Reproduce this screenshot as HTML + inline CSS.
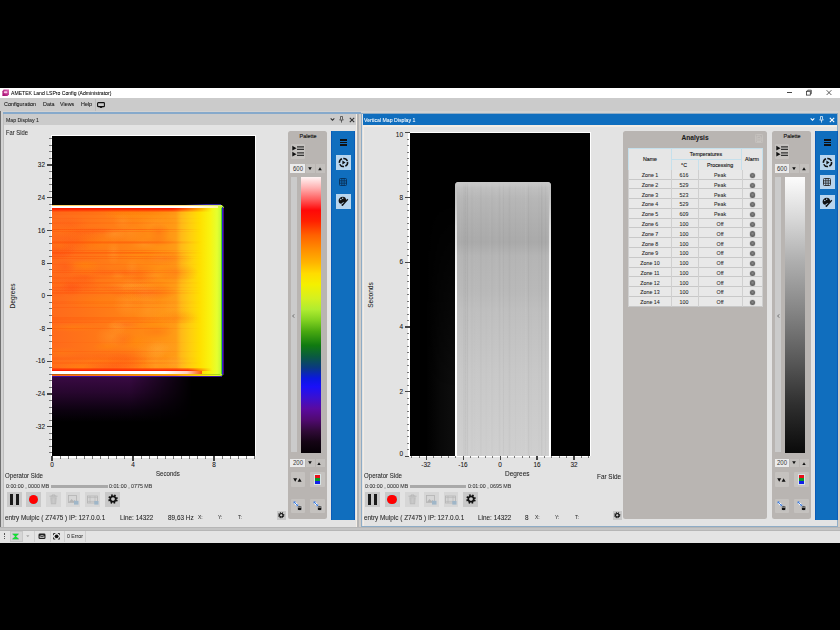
<!DOCTYPE html>
<html><head><meta charset="utf-8">
<style>
*{margin:0;padding:0;box-sizing:border-box}
html,body{width:840px;height:630px;overflow:hidden;background:#000;font-family:"Liberation Sans",sans-serif;color:#222;position:relative}
.a{position:absolute}
.t{position:absolute;white-space:nowrap;line-height:1;-webkit-text-stroke:0.06px currentColor}
</style></head><body>
<div class="a" style="left:0px;top:88px;width:840px;height:10px;background:#fff"></div>
<div class="a" style="left:0px;top:98px;width:840px;height:13px;background:#cbcbcb"></div>
<div class="a" style="left:0px;top:111px;width:840px;height:420px;background:#d2d2d2"></div>
<div class="a" style="left:0px;top:111px;width:0.9px;height:420px;background:#707070"></div>
<div class="a" style="left:2.6px;top:113px;width:354.4px;height:413.5px;background:#e3e3e3"></div>
<div class="a" style="left:2.6px;top:113px;width:1.2px;height:413.5px;background:#bdbdbd"></div>
<div class="a" style="left:3px;top:112.3px;width:358px;height:1.7px;background:#86a9cb"></div>
<div class="a" style="left:3.8px;top:114px;width:352px;height:11px;background:#cbcbcb"></div>
<div class="a" style="left:355.7px;top:114px;width:0.9px;height:413px;background:#f4eee6"></div>
<div class="a" style="left:356.8px;top:114px;width:2.2px;height:413px;background:#b4b4b4"></div>
<div class="a" style="left:359px;top:114px;width:2.3px;height:413px;background:#d0ccc8"></div>
<div class="a" style="left:361.3px;top:113px;width:477px;height:413.5px;background:#e3e3e3;border:1.3px solid #8eacc6"></div>
<div class="a" style="left:362.6px;top:114px;width:474.6px;height:11px;background:#106ebe"></div>
<div class="a" style="left:362.6px;top:125.3px;width:474.6px;height:1.6px;background:#f3ece4"></div>
<div class="a" style="left:362.8px;top:125px;width:0.9px;height:401px;background:#f3ece4"></div>
<div class="a" style="left:838.2px;top:111px;width:1.8px;height:420px;background:#d6cdc4"></div>
<div class="a" style="left:0px;top:526.5px;width:840px;height:4.5px;background:#c4c4c4"></div>
<div class="a" style="left:0px;top:527.2px;width:840px;height:0.9px;background:#b6b6b6"></div>
<div class="a" style="left:0px;top:529.6px;width:840px;height:0.9px;background:#b6b6b6"></div>
<div class="a" style="left:0px;top:531px;width:840px;height:12px;background:#e4e4e4"></div>
<svg class="a" style="left:1.5px;top:89px" width="7.5" height="7.5" viewBox="0 0 7.5 7.5"><defs><linearGradient id="ag" x1="1" y1="0" x2="0" y2="1"><stop offset="0" stop-color="#e070b8"/><stop offset="1" stop-color="#a0006a"/></linearGradient></defs><path d="M1.6 0.4h5.5v4.8l-1.6 1.9H0.4V2.3z" fill="url(#ag)"/><rect x="1.8" y="2.3" width="3.6" height="2" rx="1" fill="#ffd0ec" opacity="0.9"/></svg>
<div class="t" style="left:10.7px;top:90.69px;font-size:5.61px;transform:scaleX(0.9091);transform-origin:0 50%;color:#000">AMETEK Land LSPro Config (Administrator)</div>
<div class="a" style="left:787px;top:92.2px;width:4.6px;height:0.8px;background:#444"></div>
<svg class="a" style="left:805px;top:89px" width="8" height="8" viewBox="0 0 8 8"><rect x="1.5" y="2.3" width="3.8" height="3.8" fill="none" stroke="#333" stroke-width="0.8"/><path d="M2.7 2.3V1.2h3.6v3.6H5.3" fill="none" stroke="#333" stroke-width="0.8"/></svg>
<svg class="a" style="left:825px;top:89px" width="8" height="8" viewBox="0 0 8 8"><path d="M1.6 1.2L6.4 6M6.4 1.2L1.6 6" stroke="#333" stroke-width="0.8"/></svg>
<div class="t" style="left:3.6px;top:102.23px;font-size:5.94px;transform:scaleX(0.9091);transform-origin:0 50%;color:#111">Configuration</div>
<div class="t" style="left:42.9px;top:102.23px;font-size:5.94px;transform:scaleX(0.9091);transform-origin:0 50%;color:#111">Data</div>
<div class="t" style="left:60px;top:102.23px;font-size:5.94px;transform:scaleX(0.9091);transform-origin:0 50%;color:#111">Views</div>
<div class="t" style="left:80.7px;top:102.23px;font-size:5.94px;transform:scaleX(0.9091);transform-origin:0 50%;color:#111">Help</div>
<div class="a" style="left:95px;top:99px;width:1px;height:12px;background:#bbb"></div>
<svg class="a" style="left:96.5px;top:101.5px" width="8" height="6" viewBox="0 0 8 6"><rect x="0.6" y="0.6" width="6.8" height="4" rx="0.7" fill="none" stroke="#111" stroke-width="1.1"/><rect x="2.8" y="4.9" width="2.4" height="1" fill="#111"/></svg>
<div class="t" style="left:5.8px;top:117.84px;font-size:5.72px;transform:scaleX(0.9091);transform-origin:0 50%;color:#1e1e1e">Map Display 1</div>
<div class="t" style="left:363.8px;top:117.84px;font-size:5.72px;transform:scaleX(0.9091);transform-origin:0 50%;color:#fff">Vertical Map Display 1</div>
<svg class="a" style="left:329.5px;top:117px" width="5" height="5" viewBox="0 0 5 5"><path d="M0.7 1.4L2.5 3.3L4.3 1.4" fill="none" stroke="#333" stroke-width="1.1"/></svg>
<svg class="a" style="left:339.3px;top:116.3px" width="5" height="7" viewBox="0 0 5 7"><path d="M1.5 0.5h2v2.6l0.9 0.9h-3.8l0.9-0.9z" fill="none" stroke="#333" stroke-width="0.7"/><path d="M2.5 4v2.6" stroke="#333" stroke-width="0.7"/></svg>
<svg class="a" style="left:349px;top:116.5px" width="6" height="6" viewBox="0 0 6 6"><path d="M0.8 0.8L5.2 5.2M5.2 0.8L0.8 5.2" stroke="#333" stroke-width="1.1"/></svg>
<svg class="a" style="left:809.5px;top:117px" width="5" height="5" viewBox="0 0 5 5"><path d="M0.7 1.4L2.5 3.3L4.3 1.4" fill="none" stroke="#fff" stroke-width="1.1"/></svg>
<svg class="a" style="left:819.3px;top:116.3px" width="5" height="7" viewBox="0 0 5 7"><path d="M1.5 0.5h2v2.6l0.9 0.9h-3.8l0.9-0.9z" fill="none" stroke="#fff" stroke-width="0.7"/><path d="M2.5 4v2.6" stroke="#fff" stroke-width="0.7"/></svg>
<svg class="a" style="left:829px;top:116.5px" width="6" height="6" viewBox="0 0 6 6"><path d="M0.8 0.8L5.2 5.2M5.2 0.8L0.8 5.2" stroke="#fff" stroke-width="1.1"/></svg>
<div class="a" style="left:52px;top:135px;width:204px;height:321px;background:#fff"></div>
<div class="a" style="left:52px;top:136px;width:203px;height:320px;background:#000"></div>
<div class="a" style="left:52px;top:376px;width:140px;height:46px;background:linear-gradient(180deg,rgba(58,10,68,1) 0%,rgba(44,7,52,.9) 35%,rgba(20,3,26,.6) 75%,rgba(0,0,0,0) 100%);-webkit-mask-image:linear-gradient(90deg,#000 0%,#000 55%,transparent 100%)"></div>
<div class="a" style="left:52px;top:205px;width:172px;height:171px;border-radius:0 4px 4px 0;background:radial-gradient(16.4% 2.3% at 24.3% 15.1%,rgba(255,60,20,0.21) 0%,rgba(255,60,20,0) 100%),radial-gradient(6.6% 3.7% at 4.3% 50.7%,rgba(255,60,20,0.11) 0%,rgba(255,60,20,0) 100%),radial-gradient(8.0% 2.9% at 31.8% 82.7%,rgba(255,150,0,0.23) 0%,rgba(255,150,0,0) 100%),radial-gradient(21.6% 2.2% at 43.3% 39.7%,rgba(255,60,20,0.27) 0%,rgba(255,60,20,0) 100%),radial-gradient(10.9% 5.3% at 10.8% 11.8%,rgba(255,60,20,0.14) 0%,rgba(255,60,20,0) 100%),radial-gradient(14.8% 2.3% at 47.9% 37.2%,rgba(255,60,20,0.11) 0%,rgba(255,60,20,0) 100%),radial-gradient(11.0% 4.3% at 51.0% 42.8%,rgba(255,60,20,0.19) 0%,rgba(255,60,20,0) 100%),radial-gradient(9.9% 4.3% at 59.6% 69.9%,rgba(255,150,0,0.21) 0%,rgba(255,150,0,0) 100%),radial-gradient(21.7% 2.5% at 54.7% 28.8%,rgba(255,150,0,0.18) 0%,rgba(255,150,0,0) 100%),radial-gradient(6.6% 4.7% at 11.4% 48.9%,rgba(255,60,20,0.25) 0%,rgba(255,60,20,0) 100%),radial-gradient(17.1% 4.4% at 65.7% 31.4%,rgba(255,60,20,0.22) 0%,rgba(255,60,20,0) 100%),radial-gradient(13.6% 4.7% at 63.0% 94.5%,rgba(255,150,0,0.11) 0%,rgba(255,150,0,0) 100%),radial-gradient(19.2% 3.1% at 48.5% 99.3%,rgba(255,150,0,0.18) 0%,rgba(255,150,0,0) 100%),radial-gradient(8.7% 2.5% at 1.7% 46.2%,rgba(255,150,0,0.11) 0%,rgba(255,150,0,0) 100%),radial-gradient(12.3% 5.5% at 9.7% 24.8%,rgba(255,60,20,0.12) 0%,rgba(255,60,20,0) 100%),radial-gradient(19.1% 5.5% at 41.2% 88.3%,rgba(255,60,20,0.16) 0%,rgba(255,60,20,0) 100%),radial-gradient(21.3% 2.6% at 26.9% 88.4%,rgba(255,60,20,0.14) 0%,rgba(255,60,20,0) 100%),radial-gradient(15.4% 3.1% at 17.5% 48.5%,rgba(255,60,20,0.10) 0%,rgba(255,60,20,0) 100%),radial-gradient(21.2% 4.8% at 27.7% 56.6%,rgba(255,150,0,0.20) 0%,rgba(255,150,0,0) 100%),radial-gradient(20.4% 5.1% at 50.7% 5.4%,rgba(255,150,0,0.27) 0%,rgba(255,150,0,0) 100%),radial-gradient(7.7% 4.5% at 29.4% 39.9%,rgba(255,60,20,0.11) 0%,rgba(255,60,20,0) 100%),radial-gradient(11.4% 2.2% at 15.7% 16.2%,rgba(255,60,20,0.10) 0%,rgba(255,60,20,0) 100%),radial-gradient(6.4% 5.5% at 7.6% 36.4%,rgba(255,60,20,0.22) 0%,rgba(255,60,20,0) 100%),radial-gradient(11.8% 2.5% at 18.9% 34.7%,rgba(255,150,0,0.27) 0%,rgba(255,150,0,0) 100%),radial-gradient(7.4% 2.4% at 34.9% 48.4%,rgba(255,60,20,0.17) 0%,rgba(255,60,20,0) 100%),radial-gradient(6.4% 5.8% at 62.2% 16.1%,rgba(255,60,20,0.21) 0%,rgba(255,60,20,0) 100%),radial-gradient(14.4% 5.9% at 40.7% 2.7%,rgba(255,150,0,0.27) 0%,rgba(255,150,0,0) 100%),radial-gradient(8.7% 5.1% at 19.6% 36.7%,rgba(255,150,0,0.21) 0%,rgba(255,150,0,0) 100%),radial-gradient(19.0% 5.9% at 24.7% 22.3%,rgba(255,150,0,0.27) 0%,rgba(255,150,0,0) 100%),radial-gradient(9.6% 4.1% at 61.4% 74.0%,rgba(255,60,20,0.17) 0%,rgba(255,60,20,0) 100%),radial-gradient(10.1% 4.8% at 2.1% 27.9%,rgba(255,60,20,0.29) 0%,rgba(255,60,20,0) 100%),radial-gradient(21.3% 3.5% at 70.3% 98.8%,rgba(255,60,20,0.14) 0%,rgba(255,60,20,0) 100%),radial-gradient(16.0% 5.6% at 14.8% 20.4%,rgba(255,60,20,0.27) 0%,rgba(255,60,20,0) 100%),radial-gradient(7.4% 4.6% at 49.0% 80.0%,rgba(255,150,0,0.28) 0%,rgba(255,150,0,0) 100%),radial-gradient(8.9% 5.2% at 56.3% 47.8%,rgba(255,150,0,0.17) 0%,rgba(255,150,0,0) 100%),radial-gradient(12.4% 5.8% at 72.9% 39.6%,rgba(255,60,20,0.24) 0%,rgba(255,60,20,0) 100%),radial-gradient(20.5% 5.2% at 9.5% 15.1%,rgba(255,150,0,0.13) 0%,rgba(255,150,0,0) 100%),radial-gradient(11.6% 4.2% at 73.5% 65.7%,rgba(255,60,20,0.13) 0%,rgba(255,60,20,0) 100%),radial-gradient(14.4% 5.7% at 72.8% 65.0%,rgba(255,150,0,0.19) 0%,rgba(255,150,0,0) 100%),radial-gradient(10.0% 3.2% at 62.0% 21.1%,rgba(255,60,20,0.15) 0%,rgba(255,60,20,0) 100%),radial-gradient(8.1% 5.6% at 19.5% 41.9%,rgba(255,60,20,0.17) 0%,rgba(255,60,20,0) 100%),radial-gradient(12.7% 5.7% at 43.8% 90.4%,rgba(255,60,20,0.20) 0%,rgba(255,60,20,0) 100%),radial-gradient(13.0% 2.7% at 39.3% 1.9%,rgba(255,150,0,0.10) 0%,rgba(255,150,0,0) 100%),radial-gradient(17.6% 4.2% at 12.9% 47.3%,rgba(255,60,20,0.17) 0%,rgba(255,60,20,0) 100%),radial-gradient(7.7% 4.2% at 41.7% 78.4%,rgba(255,60,20,0.15) 0%,rgba(255,60,20,0) 100%),radial-gradient(15.0% 5.0% at 57.9% 50.8%,rgba(255,60,20,0.28) 0%,rgba(255,60,20,0) 100%),radial-gradient(14.2% 4.8% at 45.9% 50.6%,rgba(255,60,20,0.19) 0%,rgba(255,60,20,0) 100%),radial-gradient(17.2% 5.5% at 35.9% 94.2%,rgba(255,60,20,0.29) 0%,rgba(255,60,20,0) 100%),radial-gradient(19.4% 2.5% at 42.0% 94.3%,rgba(255,60,20,0.12) 0%,rgba(255,60,20,0) 100%),radial-gradient(7.2% 4.7% at 5.4% 24.1%,rgba(255,150,0,0.26) 0%,rgba(255,150,0,0) 100%),radial-gradient(16.6% 2.6% at 11.6% 71.6%,rgba(255,150,0,0.28) 0%,rgba(255,150,0,0) 100%),radial-gradient(12.4% 3.9% at 16.5% 95.3%,rgba(255,150,0,0.30) 0%,rgba(255,150,0,0) 100%),radial-gradient(14.2% 3.4% at 12.1% 43.2%,rgba(255,60,20,0.14) 0%,rgba(255,60,20,0) 100%),radial-gradient(14.9% 3.8% at 54.2% 1.9%,rgba(255,60,20,0.10) 0%,rgba(255,60,20,0) 100%),radial-gradient(7.0% 5.9% at 46.8% 51.2%,rgba(255,150,0,0.26) 0%,rgba(255,150,0,0) 100%),radial-gradient(6.6% 5.1% at 7.9% 26.6%,rgba(255,60,20,0.15) 0%,rgba(255,60,20,0) 100%),radial-gradient(19.1% 3.0% at 31.7% 91.1%,rgba(255,150,0,0.13) 0%,rgba(255,150,0,0) 100%),radial-gradient(7.4% 2.2% at 42.8% 70.0%,rgba(255,60,20,0.24) 0%,rgba(255,60,20,0) 100%),radial-gradient(16.2% 5.2% at 5.4% 93.8%,rgba(255,150,0,0.12) 0%,rgba(255,150,0,0) 100%),radial-gradient(13.3% 3.4% at 5.0% 86.3%,rgba(255,150,0,0.21) 0%,rgba(255,150,0,0) 100%),radial-gradient(8.2% 4.7% at 44.9% 16.6%,rgba(255,175,60,0.17) 0%,rgba(255,175,60,0) 100%),radial-gradient(5.6% 5.2% at 41.0% 9.5%,rgba(255,175,60,0.21) 0%,rgba(255,175,60,0) 100%),radial-gradient(8.0% 4.2% at 63.1% 31.1%,rgba(255,175,60,0.22) 0%,rgba(255,175,60,0) 100%),radial-gradient(4.1% 8.1% at 35.7% 27.5%,rgba(255,175,60,0.26) 0%,rgba(255,175,60,0) 100%),radial-gradient(11.5% 3.7% at 42.0% 47.7%,rgba(255,175,60,0.31) 0%,rgba(255,175,60,0) 100%),radial-gradient(10.7% 5.8% at 51.0% 49.6%,rgba(255,175,60,0.25) 0%,rgba(255,175,60,0) 100%),radial-gradient(6.7% 8.8% at 60.4% 93.4%,rgba(255,175,60,0.29) 0%,rgba(255,175,60,0) 100%),radial-gradient(6.8% 3.4% at 58.5% 41.4%,rgba(255,175,60,0.18) 0%,rgba(255,175,60,0) 100%),radial-gradient(6.0% 4.1% at 37.6% 71.7%,rgba(255,175,60,0.17) 0%,rgba(255,175,60,0) 100%),radial-gradient(9.4% 5.0% at 66.1% 83.3%,rgba(255,175,60,0.20) 0%,rgba(255,175,60,0) 100%),radial-gradient(5.3% 6.1% at 45.8% 46.4%,rgba(255,175,60,0.20) 0%,rgba(255,175,60,0) 100%),radial-gradient(8.4% 4.7% at 70.6% 92.5%,rgba(255,175,60,0.34) 0%,rgba(255,175,60,0) 100%),radial-gradient(4.0% 5.7% at 46.5% 37.1%,rgba(255,175,60,0.24) 0%,rgba(255,175,60,0) 100%),radial-gradient(8.0% 3.0% at 53.6% 23.1%,rgba(255,175,60,0.20) 0%,rgba(255,175,60,0) 100%),radial-gradient(4.3% 3.2% at 38.3% 41.0%,rgba(255,175,60,0.21) 0%,rgba(255,175,60,0) 100%),radial-gradient(8.2% 8.3% at 43.6% 57.7%,rgba(255,175,60,0.28) 0%,rgba(255,175,60,0) 100%),radial-gradient(7.1% 5.3% at 61.5% 84.1%,rgba(255,175,60,0.35) 0%,rgba(255,175,60,0) 100%),radial-gradient(9.1% 3.3% at 40.5% 70.2%,rgba(255,175,60,0.32) 0%,rgba(255,175,60,0) 100%),radial-gradient(9.9% 8.7% at 68.0% 61.5%,rgba(255,175,60,0.18) 0%,rgba(255,175,60,0) 100%),radial-gradient(10.7% 8.6% at 54.4% 50.4%,rgba(255,175,60,0.32) 0%,rgba(255,175,60,0) 100%),radial-gradient(9.5% 7.9% at 56.6% 85.4%,rgba(255,175,60,0.20) 0%,rgba(255,175,60,0) 100%),radial-gradient(6.9% 3.7% at 36.2% 17.0%,rgba(255,175,60,0.32) 0%,rgba(255,175,60,0) 100%),radial-gradient(9.0% 7.8% at 55.7% 61.5%,rgba(255,175,60,0.25) 0%,rgba(255,175,60,0) 100%),radial-gradient(10.0% 6.5% at 35.1% 76.8%,rgba(255,175,60,0.26) 0%,rgba(255,175,60,0) 100%),radial-gradient(9.9% 4.8% at 59.4% 10.9%,rgba(255,175,60,0.16) 0%,rgba(255,175,60,0) 100%),linear-gradient(90deg,#ff6a1c 0%,#ff7418 20%,#ff8016 40%,#ff8a14 55%,#ff9414 66%,#ff9c16 72%,#ffb818 75%,#ffcc10 80%,#ffe000 86%,#f8f410 92%,#e4ff30 96%,#a8f040 100%)"></div>
<div class="a" style="left:52px;top:207px;width:150px;height:163px;-webkit-mask-image:linear-gradient(90deg,#000 0%,#000 60%,transparent 100%);background:linear-gradient(180deg,transparent 27.5%,rgba(255,70,0,0.20) 27.5%,rgba(255,70,0,0.20) 28.3%,transparent 28.3%),linear-gradient(180deg,transparent 21.7%,rgba(255,70,0,0.21) 21.7%,rgba(255,70,0,0.21) 22.5%,transparent 22.5%),linear-gradient(180deg,transparent 95.7%,rgba(255,70,0,0.16) 95.7%,rgba(255,70,0,0.16) 96.5%,transparent 96.5%),linear-gradient(180deg,transparent 38.7%,rgba(255,70,0,0.16) 38.7%,rgba(255,70,0,0.16) 39.5%,transparent 39.5%),linear-gradient(180deg,transparent 67.6%,rgba(255,70,0,0.21) 67.6%,rgba(255,70,0,0.21) 68.4%,transparent 68.4%),linear-gradient(180deg,transparent 61.2%,rgba(255,70,0,0.19) 61.2%,rgba(255,70,0,0.19) 62.0%,transparent 62.0%),linear-gradient(180deg,transparent 9.4%,rgba(255,70,0,0.11) 9.4%,rgba(255,70,0,0.11) 10.2%,transparent 10.2%),linear-gradient(180deg,transparent 26.4%,rgba(255,70,0,0.21) 26.4%,rgba(255,70,0,0.21) 27.2%,transparent 27.2%),linear-gradient(180deg,transparent 31.2%,rgba(255,70,0,0.18) 31.2%,rgba(255,70,0,0.18) 32.0%,transparent 32.0%),linear-gradient(180deg,transparent 3.2%,rgba(255,70,0,0.09) 3.2%,rgba(255,70,0,0.09) 4.0%,transparent 4.0%),linear-gradient(180deg,transparent 27.8%,rgba(255,70,0,0.19) 27.8%,rgba(255,70,0,0.19) 28.6%,transparent 28.6%),linear-gradient(180deg,transparent 68.4%,rgba(255,70,0,0.19) 68.4%,rgba(255,70,0,0.19) 69.2%,transparent 69.2%),linear-gradient(180deg,transparent 29.9%,rgba(255,70,0,0.17) 29.9%,rgba(255,70,0,0.17) 30.7%,transparent 30.7%),linear-gradient(180deg,transparent 46.6%,rgba(255,70,0,0.16) 46.6%,rgba(255,70,0,0.16) 47.4%,transparent 47.4%),linear-gradient(180deg,transparent 13.4%,rgba(255,70,0,0.23) 13.4%,rgba(255,70,0,0.23) 14.2%,transparent 14.2%),linear-gradient(180deg,transparent 21.1%,rgba(255,70,0,0.25) 21.1%,rgba(255,70,0,0.25) 21.9%,transparent 21.9%),linear-gradient(180deg,transparent 91.9%,rgba(255,70,0,0.08) 91.9%,rgba(255,70,0,0.08) 92.7%,transparent 92.7%),linear-gradient(180deg,transparent 46.1%,rgba(255,70,0,0.22) 46.1%,rgba(255,70,0,0.22) 46.9%,transparent 46.9%),linear-gradient(180deg,transparent 94.9%,rgba(255,70,0,0.16) 94.9%,rgba(255,70,0,0.16) 95.7%,transparent 95.7%),linear-gradient(180deg,transparent 27.8%,rgba(255,70,0,0.12) 27.8%,rgba(255,70,0,0.12) 28.6%,transparent 28.6%),linear-gradient(180deg,transparent 92.8%,rgba(255,70,0,0.12) 92.8%,rgba(255,70,0,0.12) 93.6%,transparent 93.6%),linear-gradient(180deg,transparent 57.8%,rgba(255,70,0,0.10) 57.8%,rgba(255,70,0,0.10) 58.6%,transparent 58.6%),linear-gradient(180deg,transparent 52.3%,rgba(255,70,0,0.24) 52.3%,rgba(255,70,0,0.24) 53.1%,transparent 53.1%),linear-gradient(180deg,transparent 14.7%,rgba(255,70,0,0.22) 14.7%,rgba(255,70,0,0.22) 15.5%,transparent 15.5%),linear-gradient(180deg,transparent 50.8%,rgba(255,70,0,0.23) 50.8%,rgba(255,70,0,0.23) 51.6%,transparent 51.6%),linear-gradient(180deg,transparent 69.5%,rgba(255,70,0,0.12) 69.5%,rgba(255,70,0,0.12) 70.3%,transparent 70.3%),linear-gradient(180deg,transparent 88.2%,rgba(255,70,0,0.16) 88.2%,rgba(255,70,0,0.16) 89.0%,transparent 89.0%),linear-gradient(180deg,transparent 4.4%,rgba(255,70,0,0.08) 4.4%,rgba(255,70,0,0.08) 5.2%,transparent 5.2%),linear-gradient(180deg,transparent 49.2%,rgba(255,70,0,0.16) 49.2%,rgba(255,70,0,0.16) 50.0%,transparent 50.0%),linear-gradient(180deg,transparent 31.0%,rgba(255,70,0,0.10) 31.0%,rgba(255,70,0,0.10) 31.8%,transparent 31.8%),linear-gradient(180deg,transparent 35.0%,rgba(255,70,0,0.13) 35.0%,rgba(255,70,0,0.13) 35.8%,transparent 35.8%),linear-gradient(180deg,transparent 82.7%,rgba(255,70,0,0.08) 82.7%,rgba(255,70,0,0.08) 83.5%,transparent 83.5%),linear-gradient(180deg,transparent 74.1%,rgba(255,70,0,0.22) 74.1%,rgba(255,70,0,0.22) 74.9%,transparent 74.9%),linear-gradient(180deg,transparent 13.5%,rgba(255,70,0,0.24) 13.5%,rgba(255,70,0,0.24) 14.3%,transparent 14.3%),linear-gradient(180deg,transparent 70.5%,rgba(255,70,0,0.23) 70.5%,rgba(255,70,0,0.23) 71.3%,transparent 71.3%),linear-gradient(180deg,transparent 29.8%,rgba(255,70,0,0.14) 29.8%,rgba(255,70,0,0.14) 30.6%,transparent 30.6%),linear-gradient(180deg,transparent 39.7%,rgba(255,70,0,0.25) 39.7%,rgba(255,70,0,0.25) 40.5%,transparent 40.5%),linear-gradient(180deg,transparent 58.6%,rgba(255,70,0,0.14) 58.6%,rgba(255,70,0,0.14) 59.4%,transparent 59.4%),linear-gradient(180deg,transparent 43.1%,rgba(255,70,0,0.13) 43.1%,rgba(255,70,0,0.13) 43.9%,transparent 43.9%),linear-gradient(180deg,transparent 6.6%,rgba(255,70,0,0.10) 6.6%,rgba(255,70,0,0.10) 7.4%,transparent 7.4%)"></div>
<div class="a" style="left:52px;top:205px;width:170px;height:1px;background:linear-gradient(90deg,#ffd060,#ffe080 80%,#d8f060)"></div>
<div class="a" style="left:52px;top:206px;width:166px;height:2px;background:linear-gradient(90deg,#fff 0%,#fff 85%,#fff4a0 100%)"></div>
<div class="a" style="left:52px;top:208px;width:160px;height:3.5px;background:linear-gradient(180deg,rgba(255,20,0,1),rgba(255,40,0,.8) 50%,rgba(255,60,0,.2));-webkit-mask-image:linear-gradient(90deg,#000 0%,#000 75%,transparent 100%)"></div>
<div class="a" style="left:52px;top:367.5px;width:160px;height:3.5px;background:linear-gradient(180deg,rgba(255,40,0,.3),rgba(255,20,0,1));-webkit-mask-image:linear-gradient(90deg,#000 0%,#000 85%,transparent 100%)"></div>
<div class="a" style="left:52px;top:371px;width:150px;height:3.2px;background:linear-gradient(90deg,#fff 0%,#fff 75%,#ffd0c0 90%,rgba(255,60,0,.8) 100%)"></div>
<div class="a" style="left:52px;top:374.2px;width:168px;height:1.3px;background:linear-gradient(90deg,#c05a10,#ffb000 80%,#a0e020)"></div>
<div class="a" style="left:52px;top:375.5px;width:170px;height:1px;background:#3a10a0"></div>
<div class="a" style="left:221px;top:208px;width:1.4px;height:166px;background:#50d820"></div>
<div class="a" style="left:222.4px;top:207px;width:1px;height:168px;background:#2a20d0"></div>
<div class="a" style="left:223.4px;top:208px;width:0.9px;height:166px;background:#4a0a70"></div>
<div class="a" style="left:185px;top:204.4px;width:36px;height:0.9px;background:linear-gradient(90deg,rgba(48,32,160,0),#3020a0 60%)"></div>
<div class="a" style="left:185px;top:375.6px;width:36px;height:0.9px;background:linear-gradient(90deg,rgba(48,32,160,0),#3020a0 60%)"></div>
<div class="a" style="left:50.5px;top:135px;width:1.5px;height:322px;background:#fff"></div>
<div class="a" style="left:49.4px;top:452.36760000000004px;width:2.6px;height:1px;background:#444;opacity:.7"></div>
<div class="a" style="left:49.4px;top:445.8252px;width:2.6px;height:1px;background:#444;opacity:.7"></div>
<div class="a" style="left:49.4px;top:439.28280000000007px;width:2.6px;height:1px;background:#444;opacity:.7"></div>
<div class="a" style="left:49.4px;top:432.7404px;width:2.6px;height:1px;background:#444;opacity:.7"></div>
<div class="a" style="left:49.4px;top:419.65560000000005px;width:2.6px;height:1px;background:#444;opacity:.7"></div>
<div class="a" style="left:49.4px;top:413.1132px;width:2.6px;height:1px;background:#444;opacity:.7"></div>
<div class="a" style="left:49.4px;top:406.5708px;width:2.6px;height:1px;background:#444;opacity:.7"></div>
<div class="a" style="left:49.4px;top:400.02840000000003px;width:2.6px;height:1px;background:#444;opacity:.7"></div>
<div class="a" style="left:49.4px;top:386.94360000000006px;width:2.6px;height:1px;background:#444;opacity:.7"></div>
<div class="a" style="left:49.4px;top:380.4012px;width:2.6px;height:1px;background:#444;opacity:.7"></div>
<div class="a" style="left:49.4px;top:373.85880000000003px;width:2.6px;height:1px;background:#444;opacity:.7"></div>
<div class="a" style="left:49.4px;top:367.31640000000004px;width:2.6px;height:1px;background:#444;opacity:.7"></div>
<div class="a" style="left:49.4px;top:354.2316px;width:2.6px;height:1px;background:#444;opacity:.7"></div>
<div class="a" style="left:49.4px;top:347.6892px;width:2.6px;height:1px;background:#444;opacity:.7"></div>
<div class="a" style="left:49.4px;top:341.14680000000004px;width:2.6px;height:1px;background:#444;opacity:.7"></div>
<div class="a" style="left:49.4px;top:334.60440000000006px;width:2.6px;height:1px;background:#444;opacity:.7"></div>
<div class="a" style="left:49.4px;top:321.5196px;width:2.6px;height:1px;background:#444;opacity:.7"></div>
<div class="a" style="left:49.4px;top:314.97720000000004px;width:2.6px;height:1px;background:#444;opacity:.7"></div>
<div class="a" style="left:49.4px;top:308.4348px;width:2.6px;height:1px;background:#444;opacity:.7"></div>
<div class="a" style="left:49.4px;top:301.8924px;width:2.6px;height:1px;background:#444;opacity:.7"></div>
<div class="a" style="left:49.4px;top:288.80760000000004px;width:2.6px;height:1px;background:#444;opacity:.7"></div>
<div class="a" style="left:49.4px;top:282.26520000000005px;width:2.6px;height:1px;background:#444;opacity:.7"></div>
<div class="a" style="left:49.4px;top:275.7228px;width:2.6px;height:1px;background:#444;opacity:.7"></div>
<div class="a" style="left:49.4px;top:269.1804px;width:2.6px;height:1px;background:#444;opacity:.7"></div>
<div class="a" style="left:49.4px;top:256.0956px;width:2.6px;height:1px;background:#444;opacity:.7"></div>
<div class="a" style="left:49.4px;top:249.5532px;width:2.6px;height:1px;background:#444;opacity:.7"></div>
<div class="a" style="left:49.4px;top:243.01080000000002px;width:2.6px;height:1px;background:#444;opacity:.7"></div>
<div class="a" style="left:49.4px;top:236.46840000000003px;width:2.6px;height:1px;background:#444;opacity:.7"></div>
<div class="a" style="left:49.4px;top:223.3836px;width:2.6px;height:1px;background:#444;opacity:.7"></div>
<div class="a" style="left:49.4px;top:216.84120000000001px;width:2.6px;height:1px;background:#444;opacity:.7"></div>
<div class="a" style="left:49.4px;top:210.29880000000003px;width:2.6px;height:1px;background:#444;opacity:.7"></div>
<div class="a" style="left:49.4px;top:203.7564px;width:2.6px;height:1px;background:#444;opacity:.7"></div>
<div class="a" style="left:49.4px;top:190.6716px;width:2.6px;height:1px;background:#444;opacity:.7"></div>
<div class="a" style="left:49.4px;top:184.12920000000003px;width:2.6px;height:1px;background:#444;opacity:.7"></div>
<div class="a" style="left:49.4px;top:177.5868px;width:2.6px;height:1px;background:#444;opacity:.7"></div>
<div class="a" style="left:49.4px;top:171.0444px;width:2.6px;height:1px;background:#444;opacity:.7"></div>
<div class="a" style="left:49.4px;top:157.9596px;width:2.6px;height:1px;background:#444;opacity:.7"></div>
<div class="a" style="left:49.4px;top:151.4172px;width:2.6px;height:1px;background:#444;opacity:.7"></div>
<div class="a" style="left:49.4px;top:144.87480000000002px;width:2.6px;height:1px;background:#444;opacity:.7"></div>
<div class="a" style="left:49.4px;top:138.3324px;width:2.6px;height:1px;background:#444;opacity:.7"></div>
<div class="a" style="left:47px;top:164.40200000000002px;width:5px;height:1.2px;background:#444"></div>
<div class="t" style="left:45.4px;top:161.10px;font-size:7.0px;color:#111;transform:translateX(-100%) scaleX(0.92);transform-origin:100% 50%">32</div>
<div class="a" style="left:47px;top:197.114px;width:5px;height:1.2px;background:#444"></div>
<div class="t" style="left:45.4px;top:193.81px;font-size:7.0px;color:#111;transform:translateX(-100%) scaleX(0.92);transform-origin:100% 50%">24</div>
<div class="a" style="left:47px;top:229.82600000000002px;width:5px;height:1.2px;background:#444"></div>
<div class="t" style="left:45.4px;top:226.53px;font-size:7.0px;color:#111;transform:translateX(-100%) scaleX(0.92);transform-origin:100% 50%">16</div>
<div class="a" style="left:47px;top:262.538px;width:5px;height:1.2px;background:#444"></div>
<div class="t" style="left:45.4px;top:259.24px;font-size:7.0px;color:#111;transform:translateX(-100%) scaleX(0.92);transform-origin:100% 50%">8</div>
<div class="a" style="left:47px;top:295.25px;width:5px;height:1.2px;background:#444"></div>
<div class="t" style="left:45.4px;top:291.95px;font-size:7.0px;color:#111;transform:translateX(-100%) scaleX(0.92);transform-origin:100% 50%">0</div>
<div class="a" style="left:47px;top:327.962px;width:5px;height:1.2px;background:#444"></div>
<div class="t" style="left:45.4px;top:324.66px;font-size:7.0px;color:#111;transform:translateX(-100%) scaleX(0.92);transform-origin:100% 50%">-8</div>
<div class="a" style="left:47px;top:360.674px;width:5px;height:1.2px;background:#444"></div>
<div class="t" style="left:45.4px;top:357.37px;font-size:7.0px;color:#111;transform:translateX(-100%) scaleX(0.92);transform-origin:100% 50%">-16</div>
<div class="a" style="left:47px;top:393.386px;width:5px;height:1.2px;background:#444"></div>
<div class="t" style="left:45.4px;top:390.09px;font-size:7.0px;color:#111;transform:translateX(-100%) scaleX(0.92);transform-origin:100% 50%">-24</div>
<div class="a" style="left:47px;top:426.098px;width:5px;height:1.2px;background:#444"></div>
<div class="t" style="left:45.4px;top:422.80px;font-size:7.0px;color:#111;transform:translateX(-100%) scaleX(0.92);transform-origin:100% 50%">-32</div>
<div class="a" style="left:51px;top:456px;width:204px;height:1.5px;background:#fff"></div>
<div class="a" style="left:59.6px;top:456px;width:1px;height:2.6px;background:#444;opacity:.7"></div>
<div class="a" style="left:67.7px;top:456px;width:1px;height:2.6px;background:#444;opacity:.7"></div>
<div class="a" style="left:75.8px;top:456px;width:1px;height:2.6px;background:#444;opacity:.7"></div>
<div class="a" style="left:83.9px;top:456px;width:1px;height:2.6px;background:#444;opacity:.7"></div>
<div class="a" style="left:92.0px;top:456px;width:1px;height:2.6px;background:#444;opacity:.7"></div>
<div class="a" style="left:100.1px;top:456px;width:1px;height:2.6px;background:#444;opacity:.7"></div>
<div class="a" style="left:108.19999999999999px;top:456px;width:1px;height:2.6px;background:#444;opacity:.7"></div>
<div class="a" style="left:116.3px;top:456px;width:1px;height:2.6px;background:#444;opacity:.7"></div>
<div class="a" style="left:124.4px;top:456px;width:1px;height:2.6px;background:#444;opacity:.7"></div>
<div class="a" style="left:140.60000000000002px;top:456px;width:1px;height:2.6px;background:#444;opacity:.7"></div>
<div class="a" style="left:148.7px;top:456px;width:1px;height:2.6px;background:#444;opacity:.7"></div>
<div class="a" style="left:156.8px;top:456px;width:1px;height:2.6px;background:#444;opacity:.7"></div>
<div class="a" style="left:164.89999999999998px;top:456px;width:1px;height:2.6px;background:#444;opacity:.7"></div>
<div class="a" style="left:173.0px;top:456px;width:1px;height:2.6px;background:#444;opacity:.7"></div>
<div class="a" style="left:181.1px;top:456px;width:1px;height:2.6px;background:#444;opacity:.7"></div>
<div class="a" style="left:189.2px;top:456px;width:1px;height:2.6px;background:#444;opacity:.7"></div>
<div class="a" style="left:197.3px;top:456px;width:1px;height:2.6px;background:#444;opacity:.7"></div>
<div class="a" style="left:205.4px;top:456px;width:1px;height:2.6px;background:#444;opacity:.7"></div>
<div class="a" style="left:221.6px;top:456px;width:1px;height:2.6px;background:#444;opacity:.7"></div>
<div class="a" style="left:229.70000000000002px;top:456px;width:1px;height:2.6px;background:#444;opacity:.7"></div>
<div class="a" style="left:237.79999999999998px;top:456px;width:1px;height:2.6px;background:#444;opacity:.7"></div>
<div class="a" style="left:245.9px;top:456px;width:1px;height:2.6px;background:#444;opacity:.7"></div>
<div class="a" style="left:254.0px;top:456px;width:1px;height:2.6px;background:#444;opacity:.7"></div>
<div class="a" style="left:51.4px;top:456px;width:1.2px;height:4.8px;background:#444"></div>
<div class="t" style="left:52.0px;top:460.80px;font-size:7.0px;color:#111;transform:translateX(-50%) scaleX(0.92)">0</div>
<div class="a" style="left:132.4px;top:456px;width:1.2px;height:4.8px;background:#444"></div>
<div class="t" style="left:133.0px;top:460.80px;font-size:7.0px;color:#111;transform:translateX(-50%) scaleX(0.92)">4</div>
<div class="a" style="left:213.4px;top:456px;width:1.2px;height:4.8px;background:#444"></div>
<div class="t" style="left:214.0px;top:460.80px;font-size:7.0px;color:#111;transform:translateX(-50%) scaleX(0.92)">8</div>
<div class="t" style="left:5.5px;top:130.41px;font-size:6.38px;transform:scaleX(0.9091);transform-origin:0 50%;color:#1e1e1e">Far Side</div>
<div class="t" style="left:13.3px;top:296.3px;font-size:6.6px;color:#1e1e1e;transform:translate(-50%,-50%) rotate(-90deg)">Degrees</div>
<div class="t" style="left:156px;top:470.55px;font-size:6.71px;transform:scaleX(0.9091);transform-origin:0 50%;color:#1e1e1e">Seconds</div>
<div class="t" style="left:5px;top:472.75px;font-size:6.71px;transform:scaleX(0.9091);transform-origin:0 50%;color:#1e1e1e">Operator Side</div>
<div class="a" style="left:288px;top:130.7px;width:39px;height:388.8px;background:#b9b5b2;border-radius:2.5px"></div>
<div class="t" style="left:307.5px;top:134.13px;font-size:5.94px;transform:translateX(-50%) scaleX(0.9091);transform-origin:50% 50%;color:#111;-webkit-text-stroke:0.15px #111">Palette</div>
<div class="a" style="left:290.6px;top:143.9px;width:14.5px;height:14.9px;background:#c5c2bf;border-radius:1px"></div>
<svg class="a" style="left:291.5px;top:145px" width="13" height="12" viewBox="0 0 13 12"><path d="M0.3 0.8L4.5 3.2L0.3 5.6Z M0.3 6.8L4.5 9.2L0.3 11.6Z" fill="#111"/><path d="M5 1.8h7M5 4.3h7M5 7.8h7M5 10.3h7" stroke="#333" stroke-width="1.2"/></svg>
<div class="a" style="left:290.3px;top:164px;width:14.6px;height:8.6px;background:#ebebeb"></div>
<div class="t" style="left:297.6px;top:165.90px;font-size:6.60px;transform:translateX(-50%) scaleX(0.9091);transform-origin:50% 50%;color:#333;-webkit-text-stroke:0">600</div>
<div class="a" style="left:305.9px;top:164px;width:9px;height:8.6px;background:#c3c0bd"></div>
<div class="a" style="left:316px;top:164px;width:9px;height:8.6px;background:#c3c0bd"></div>
<svg class="a" style="left:307.7px;top:166.8px" width="4" height="3.5" viewBox="0 0 4 3.5"><path d="M0.2 0.2h3.6L2 3.2z" fill="#111"/></svg>
<svg class="a" style="left:317.6px;top:167px" width="4" height="3.5" viewBox="0 0 4 3.5"><path d="M0.2 3.2h3.6L2 0.2z" fill="#111"/></svg>
<div class="a" style="left:290.6px;top:177.3px;width:6.6px;height:275px;background:#cbcbcb"></div>
<svg class="a" style="left:292.3px;top:313.5px" width="3" height="4" viewBox="0 0 3 4"><path d="M2.5 0.3L0.5 2L2.5 3.7" fill="none" stroke="#555" stroke-width="0.7"/></svg>
<div class="a" style="left:300.9px;top:177.3px;width:20.2px;height:275.5px;background:linear-gradient(180deg,#fff4f4 0%,#ffb0b0 4%,#ff6060 8%,#ff0808 12%,#ff2000 16%,#ff6000 21%,#ff8c00 26%,#ffb400 31%,#ffdc00 35%,#f4f000 39%,#d4f020 44%,#b0ec30 48%,#80d020 52%,#48a810 56%,#107a10 61%,#0a5a40 65%,#0a3a80 69%,#0a18e0 73%,#1a10f8 76%,#3a10d0 80%,#5a0aa0 84%,#500a70 88%,#300a38 92%,#140414 96%,#050005 100%)"></div>
<div class="a" style="left:290.3px;top:458.5px;width:14.6px;height:8.9px;background:#ebebeb"></div>
<div class="t" style="left:297.6px;top:460.40px;font-size:6.60px;transform:translateX(-50%) scaleX(0.9091);transform-origin:50% 50%;color:#333;-webkit-text-stroke:0">200</div>
<div class="a" style="left:305.9px;top:458.5px;width:9px;height:8.9px;background:#c3c0bd"></div>
<div class="a" style="left:316px;top:458.5px;width:9px;height:8.9px;background:#c3c0bd"></div>
<svg class="a" style="left:307.7px;top:461.3px" width="4" height="3.5" viewBox="0 0 4 3.5"><path d="M0.2 0.2h3.6L2 3.2z" fill="#111"/></svg>
<svg class="a" style="left:317.4px;top:461.5px" width="4" height="3.5" viewBox="0 0 4 3.5"><path d="M0.2 3.2h3.6L2 0.2z" fill="#111"/></svg>
<div class="a" style="left:290.5px;top:472px;width:14.5px;height:15px;background:#c5c2bf;border-radius:1px"></div>
<svg class="a" style="left:293.2px;top:477.5px" width="9" height="4" viewBox="0 0 9 4"><path d="M0.2 0.3h4L2.2 3.7z M4.6 3.7h4L6.6 0.3z" fill="#111"/></svg>
<div class="a" style="left:310px;top:472px;width:14.5px;height:15px;background:#c5c2bf;border-radius:1px"></div>
<div class="a" style="left:313.8px;top:474.4px;width:6.9px;height:10.2px;background:#d8e4e4"></div>
<div class="a" style="left:314.5px;top:475px;width:5.5px;height:3px;background:#e8101a"></div>
<div class="a" style="left:314.5px;top:478px;width:5.5px;height:3px;background:#0a9a2a"></div>
<div class="a" style="left:314.5px;top:481px;width:5.5px;height:3px;background:#1020e8"></div>
<div class="a" style="left:290.5px;top:498.8px;width:14.5px;height:14.5px;background:#c5c2bf;border-radius:1px"></div>
<svg class="a" style="left:293.0px;top:500.8px" width="10" height="10" viewBox="0 0 10 10"><path d="M1.2 1.2L4.6 4.6" stroke="#fff" stroke-width="2"/><path d="M1.2 1.2L4.6 4.6" stroke="#2a6fd9" stroke-width="0.9"/><path d="M0.6 0.6h2v0.8h-1.2v1.2h-0.8z M5.2 5.2h-2v-0.8h1.2v-1.2h0.8z" fill="#2a6fd9"/><path d="M4.4 5.6h4.4v2.6a1.6 1.6 0 0 1-1.6 1.4h-1.2a1.6 1.6 0 0 1-1.6-1.4z" fill="#111" stroke="#f0f0f0" stroke-width="0.6"/><ellipse cx="6.6" cy="5.6" rx="2.2" ry="0.8" fill="#333" stroke="#f0f0f0" stroke-width="0.5"/></svg>
<div class="a" style="left:310px;top:498.8px;width:14.5px;height:14.5px;background:#c5c2bf;border-radius:1px"></div>
<svg class="a" style="left:312.5px;top:500.8px" width="10" height="10" viewBox="0 0 10 10"><path d="M1.2 1.2L4.6 4.6" stroke="#fff" stroke-width="2"/><path d="M1.2 1.2L4.6 4.6" stroke="#2a6fd9" stroke-width="0.9"/><path d="M0.6 0.6h2v0.8h-1.2v1.2h-0.8z M5.2 5.2h-2v-0.8h1.2v-1.2h0.8z" fill="#2a6fd9"/><path d="M4.4 5.6h4.4v2.6a1.6 1.6 0 0 1-1.6 1.4h-1.2a1.6 1.6 0 0 1-1.6-1.4z" fill="#111" stroke="#f0f0f0" stroke-width="0.6"/><ellipse cx="6.6" cy="5.6" rx="2.2" ry="0.8" fill="#333" stroke="#f0f0f0" stroke-width="0.5"/></svg>
<div class="a" style="left:772.2px;top:130.7px;width:39px;height:388.8px;background:#b9b5b2;border-radius:2.5px"></div>
<div class="t" style="left:791.7px;top:134.13px;font-size:5.94px;transform:translateX(-50%) scaleX(0.9091);transform-origin:50% 50%;color:#111;-webkit-text-stroke:0.15px #111">Palette</div>
<div class="a" style="left:774.8000000000001px;top:143.9px;width:14.5px;height:14.9px;background:#c5c2bf;border-radius:1px"></div>
<svg class="a" style="left:775.7px;top:145px" width="13" height="12" viewBox="0 0 13 12"><path d="M0.3 0.8L4.5 3.2L0.3 5.6Z M0.3 6.8L4.5 9.2L0.3 11.6Z" fill="#111"/><path d="M5 1.8h7M5 4.3h7M5 7.8h7M5 10.3h7" stroke="#333" stroke-width="1.2"/></svg>
<div class="a" style="left:774.5px;top:164px;width:14.6px;height:8.6px;background:#ebebeb"></div>
<div class="t" style="left:781.8000000000001px;top:165.90px;font-size:6.60px;transform:translateX(-50%) scaleX(0.9091);transform-origin:50% 50%;color:#333;-webkit-text-stroke:0">600</div>
<div class="a" style="left:790.1px;top:164px;width:9px;height:8.6px;background:#c3c0bd"></div>
<div class="a" style="left:800.2px;top:164px;width:9px;height:8.6px;background:#c3c0bd"></div>
<svg class="a" style="left:791.9000000000001px;top:166.8px" width="4" height="3.5" viewBox="0 0 4 3.5"><path d="M0.2 0.2h3.6L2 3.2z" fill="#111"/></svg>
<svg class="a" style="left:801.8000000000001px;top:167px" width="4" height="3.5" viewBox="0 0 4 3.5"><path d="M0.2 3.2h3.6L2 0.2z" fill="#111"/></svg>
<div class="a" style="left:774.8000000000001px;top:177.3px;width:6.6px;height:275px;background:#cbcbcb"></div>
<svg class="a" style="left:776.5px;top:313.5px" width="3" height="4" viewBox="0 0 3 4"><path d="M2.5 0.3L0.5 2L2.5 3.7" fill="none" stroke="#555" stroke-width="0.7"/></svg>
<div class="a" style="left:785.1px;top:177.3px;width:20.2px;height:275.5px;background:linear-gradient(180deg,#fcfcfc 0%,#d8d8d8 15%,#b0b0b0 30%,#868686 48%,#5a5a5a 66%,#303030 82%,#0a0a0a 100%)"></div>
<div class="a" style="left:774.5px;top:458.5px;width:14.6px;height:8.9px;background:#ebebeb"></div>
<div class="t" style="left:781.8000000000001px;top:460.40px;font-size:6.60px;transform:translateX(-50%) scaleX(0.9091);transform-origin:50% 50%;color:#333;-webkit-text-stroke:0">200</div>
<div class="a" style="left:790.1px;top:458.5px;width:9px;height:8.9px;background:#c3c0bd"></div>
<div class="a" style="left:800.2px;top:458.5px;width:9px;height:8.9px;background:#c3c0bd"></div>
<svg class="a" style="left:791.9000000000001px;top:461.3px" width="4" height="3.5" viewBox="0 0 4 3.5"><path d="M0.2 0.2h3.6L2 3.2z" fill="#111"/></svg>
<svg class="a" style="left:801.6px;top:461.5px" width="4" height="3.5" viewBox="0 0 4 3.5"><path d="M0.2 3.2h3.6L2 0.2z" fill="#111"/></svg>
<div class="a" style="left:774.7px;top:472px;width:14.5px;height:15px;background:#c5c2bf;border-radius:1px"></div>
<svg class="a" style="left:777.4000000000001px;top:477.5px" width="9" height="4" viewBox="0 0 9 4"><path d="M0.2 0.3h4L2.2 3.7z M4.6 3.7h4L6.6 0.3z" fill="#111"/></svg>
<div class="a" style="left:794.2px;top:472px;width:14.5px;height:15px;background:#c5c2bf;border-radius:1px"></div>
<div class="a" style="left:798.0px;top:474.4px;width:6.9px;height:10.2px;background:#d8e4e4"></div>
<div class="a" style="left:798.7px;top:475px;width:5.5px;height:3px;background:#e8101a"></div>
<div class="a" style="left:798.7px;top:478px;width:5.5px;height:3px;background:#0a9a2a"></div>
<div class="a" style="left:798.7px;top:481px;width:5.5px;height:3px;background:#1020e8"></div>
<div class="a" style="left:774.7px;top:498.8px;width:14.5px;height:14.5px;background:#c5c2bf;border-radius:1px"></div>
<svg class="a" style="left:777.2px;top:500.8px" width="10" height="10" viewBox="0 0 10 10"><path d="M1.2 1.2L4.6 4.6" stroke="#fff" stroke-width="2"/><path d="M1.2 1.2L4.6 4.6" stroke="#2a6fd9" stroke-width="0.9"/><path d="M0.6 0.6h2v0.8h-1.2v1.2h-0.8z M5.2 5.2h-2v-0.8h1.2v-1.2h0.8z" fill="#2a6fd9"/><path d="M4.4 5.6h4.4v2.6a1.6 1.6 0 0 1-1.6 1.4h-1.2a1.6 1.6 0 0 1-1.6-1.4z" fill="#111" stroke="#f0f0f0" stroke-width="0.6"/><ellipse cx="6.6" cy="5.6" rx="2.2" ry="0.8" fill="#333" stroke="#f0f0f0" stroke-width="0.5"/></svg>
<div class="a" style="left:794.2px;top:498.8px;width:14.5px;height:14.5px;background:#c5c2bf;border-radius:1px"></div>
<svg class="a" style="left:796.7px;top:500.8px" width="10" height="10" viewBox="0 0 10 10"><path d="M1.2 1.2L4.6 4.6" stroke="#fff" stroke-width="2"/><path d="M1.2 1.2L4.6 4.6" stroke="#2a6fd9" stroke-width="0.9"/><path d="M0.6 0.6h2v0.8h-1.2v1.2h-0.8z M5.2 5.2h-2v-0.8h1.2v-1.2h0.8z" fill="#2a6fd9"/><path d="M4.4 5.6h4.4v2.6a1.6 1.6 0 0 1-1.6 1.4h-1.2a1.6 1.6 0 0 1-1.6-1.4z" fill="#111" stroke="#f0f0f0" stroke-width="0.6"/><ellipse cx="6.6" cy="5.6" rx="2.2" ry="0.8" fill="#333" stroke="#f0f0f0" stroke-width="0.5"/></svg>
<div class="a" style="left:331.2px;top:131px;width:24px;height:388.5px;background:#106ebe;border-left:0.8px solid #0a5cb8;border-right:0.8px solid #0a5cb8"></div>
<div class="a" style="left:339.5px;top:139.0px;width:7.5px;height:1.5px;background:#111"></div>
<div class="a" style="left:339.5px;top:141.6px;width:7.5px;height:1.5px;background:#111"></div>
<div class="a" style="left:339.5px;top:144.2px;width:7.5px;height:1.5px;background:#111"></div>
<div class="a" style="left:336.09999999999997px;top:154.9px;width:14.6px;height:14.7px;background:#b8d5ee"></div>
<svg class="a" style="left:337.9px;top:156.7px" width="11" height="11" viewBox="0 0 11 11"><circle cx="5.5" cy="5.5" r="4.1" fill="none" stroke="#111" stroke-width="1.5" stroke-dasharray="5.04 1.4" transform="rotate(-9.8 5.5 5.5)"/><path d="M4.4 3.5L7.5 5.5L4.4 7.5z" fill="#111"/></svg>
<svg class="a" style="left:339.2px;top:178px" width="8" height="8" viewBox="0 0 8 8"><rect x="0.5" y="0.5" width="7" height="7" rx="0.9" fill="none" stroke="#0a3560" stroke-width="1"/><path d="M0.5 2.8h7M0.5 5.2h7M2.8 0.5v7M5.2 0.5v7" stroke="#0a3560" stroke-width="0.9"/></svg>
<div class="a" style="left:336.09999999999997px;top:193.9px;width:14.6px;height:14.8px;background:#b8d5ee"></div>
<svg class="a" style="left:338.0px;top:196.3px" width="11" height="10" viewBox="0 0 11 10"><path d="M5 0.8C2.3 0.8 0.6 2.7 0.6 4.8C0.6 6.6 1.8 7.8 3 7.8C4 7.8 4.2 7 4.8 6.6C5.5 6.1 6.6 6.3 7.3 5.8C8 5.3 8.3 4.2 8 3.2C7.5 1.6 6.4 0.8 5 0.8Z" fill="#111"/><circle cx="2.8" cy="3.5" r="0.7" fill="#b8d5ee"/><circle cx="4.7" cy="2.3" r="0.7" fill="#b8d5ee"/><path d="M9.8 3.2L4.8 8.8" stroke="#111" stroke-width="1.3"/><circle cx="4.4" cy="9" r="0.9" fill="#111"/></svg>
<div class="a" style="left:815.3px;top:131px;width:22.4px;height:388.5px;background:#106ebe;border-left:0.8px solid #0a5cb8;border-right:0.8px solid #0a5cb8"></div>
<div class="a" style="left:823.5999999999999px;top:139.0px;width:7.5px;height:1.5px;background:#111"></div>
<div class="a" style="left:823.5999999999999px;top:141.6px;width:7.5px;height:1.5px;background:#111"></div>
<div class="a" style="left:823.5999999999999px;top:144.2px;width:7.5px;height:1.5px;background:#111"></div>
<div class="a" style="left:820.1999999999999px;top:154.9px;width:14.6px;height:14.7px;background:#b8d5ee"></div>
<svg class="a" style="left:822.0px;top:156.7px" width="11" height="11" viewBox="0 0 11 11"><circle cx="5.5" cy="5.5" r="4.1" fill="none" stroke="#111" stroke-width="1.5" stroke-dasharray="5.04 1.4" transform="rotate(-9.8 5.5 5.5)"/><path d="M4.4 3.5L7.5 5.5L4.4 7.5z" fill="#111"/></svg>
<div class="a" style="left:820.1999999999999px;top:174.9px;width:14.6px;height:14.5px;background:#b8d5ee"></div>
<svg class="a" style="left:823.3px;top:178px" width="8" height="8" viewBox="0 0 8 8"><rect x="0.5" y="0.5" width="7" height="7" rx="0.9" fill="none" stroke="#333" stroke-width="1"/><path d="M0.5 2.8h7M0.5 5.2h7M2.8 0.5v7M5.2 0.5v7" stroke="#333" stroke-width="0.9"/></svg>
<div class="a" style="left:820.1999999999999px;top:194.5px;width:14.6px;height:14.8px;background:#b8d5ee"></div>
<svg class="a" style="left:822.0999999999999px;top:196.9px" width="11" height="10" viewBox="0 0 11 10"><path d="M5 0.8C2.3 0.8 0.6 2.7 0.6 4.8C0.6 6.6 1.8 7.8 3 7.8C4 7.8 4.2 7 4.8 6.6C5.5 6.1 6.6 6.3 7.3 5.8C8 5.3 8.3 4.2 8 3.2C7.5 1.6 6.4 0.8 5 0.8Z" fill="#111"/><circle cx="2.8" cy="3.5" r="0.7" fill="#b8d5ee"/><circle cx="4.7" cy="2.3" r="0.7" fill="#b8d5ee"/><path d="M9.8 3.2L4.8 8.8" stroke="#111" stroke-width="1.3"/><circle cx="4.4" cy="9" r="0.9" fill="#111"/></svg>
<div class="t" style="left:6.2px;top:484.08px;font-size:5.83px;transform:scaleX(0.9091);transform-origin:0 50%;color:#333">0:00:00 , 0000 MB</div>
<div class="a" style="left:51.1px;top:484.6px;width:56.5px;height:3.6px;background:#a9a9a9"></div>
<div class="t" style="left:109.1px;top:484.08px;font-size:5.83px;transform:scaleX(0.9091);transform-origin:0 50%;color:#333">0:01:00 , 0775 MB</div>
<div class="a" style="left:7px;top:491.9px;width:14.7px;height:14.7px;background:#c9c9c9"></div>
<div class="a" style="left:9.6px;top:493.6px;width:3px;height:11.2px;background:#1a1a1a"></div>
<div class="a" style="left:15.7px;top:493.6px;width:3px;height:11.2px;background:#1a1a1a"></div>
<div class="a" style="left:26.3px;top:491.9px;width:15.2px;height:14.7px;background:#c9c9c9"></div>
<div class="a" style="left:28.9px;top:494.6px;width:9.6px;height:9.6px;border-radius:50%;background:#ff0000;box-shadow:0 0 0 0.7px #a8d4dc"></div>
<div class="a" style="left:46.1px;top:491.9px;width:14.6px;height:14.7px;background:#d6d6d6"></div>
<svg class="a" style="left:49.2px;top:493.8px" width="9" height="11" viewBox="0 0 9 11"><path d="M0.5 2.2h8M3 2.2V1h3v1.2" fill="none" stroke="#b0b0b0" stroke-width="0.8"/><path d="M1.3 3.2h6.4l-0.6 7h-5.2z" fill="#bcbcbc"/><path d="M3.2 4.2v5M4.5 4.2v5M5.8 4.2v5" stroke="#d6d6d6" stroke-width="0.5"/></svg>
<div class="a" style="left:65.8px;top:491.9px;width:14.7px;height:14.7px;background:#d6d6d6"></div>
<svg class="a" style="left:67.8px;top:494.5px" width="11" height="10" viewBox="0 0 11 10"><rect x="0.5" y="0.5" width="8" height="7" fill="none" stroke="#b4b4b4" stroke-width="0.8"/><path d="M1 7L3.5 4L5.5 6L6.5 5L8 7z" fill="#b4b4b4"/><rect x="6" y="5.8" width="4.5" height="3.8" fill="#9fb6c8"/></svg>
<div class="a" style="left:85.1px;top:491.9px;width:14.7px;height:14.7px;background:#d6d6d6"></div>
<svg class="a" style="left:86.8px;top:494.5px" width="12" height="10" viewBox="0 0 12 10"><rect x="0.5" y="1" width="10" height="7" fill="none" stroke="#b4b4b4" stroke-width="0.8"/><path d="M0.5 2.6h10M0.5 6.4h10M3 1v7M8 1v7" stroke="#b4b4b4" stroke-width="0.6"/><rect x="7.3" y="6" width="4.2" height="3.6" fill="#9fb6c8"/></svg>
<div class="a" style="left:105px;top:491.9px;width:15px;height:14.7px;background:#c9c9c9"></div>
<svg class="a" style="left:107.5px;top:494.3px" width="10" height="10" viewBox="0 0 10 10"><g transform="translate(5 5)"><circle r="3.9" fill="none" stroke="#111" stroke-width="1.8" stroke-dasharray="1.53 1.53" transform="rotate(11)"/><circle r="2.7" fill="none" stroke="#111" stroke-width="1.7"/></g></svg>
<div class="t" style="left:364.59999999999997px;top:484.08px;font-size:5.83px;transform:scaleX(0.9091);transform-origin:0 50%;color:#333">0:00:00 , 0000 MB</div>
<div class="a" style="left:409.5px;top:484.6px;width:56.5px;height:3.6px;background:#a9a9a9"></div>
<div class="t" style="left:467.5px;top:484.08px;font-size:5.83px;transform:scaleX(0.9091);transform-origin:0 50%;color:#333">0:01:00 , 0695 MB</div>
<div class="a" style="left:365.4px;top:491.9px;width:14.7px;height:14.7px;background:#c9c9c9"></div>
<div class="a" style="left:368.0px;top:493.6px;width:3px;height:11.2px;background:#1a1a1a"></div>
<div class="a" style="left:374.09999999999997px;top:493.6px;width:3px;height:11.2px;background:#1a1a1a"></div>
<div class="a" style="left:384.7px;top:491.9px;width:15.2px;height:14.7px;background:#c9c9c9"></div>
<div class="a" style="left:387.29999999999995px;top:494.6px;width:9.6px;height:9.6px;border-radius:50%;background:#ff0000;box-shadow:0 0 0 0.7px #a8d4dc"></div>
<div class="a" style="left:404.5px;top:491.9px;width:14.6px;height:14.7px;background:#d6d6d6"></div>
<svg class="a" style="left:407.59999999999997px;top:493.8px" width="9" height="11" viewBox="0 0 9 11"><path d="M0.5 2.2h8M3 2.2V1h3v1.2" fill="none" stroke="#b0b0b0" stroke-width="0.8"/><path d="M1.3 3.2h6.4l-0.6 7h-5.2z" fill="#bcbcbc"/><path d="M3.2 4.2v5M4.5 4.2v5M5.8 4.2v5" stroke="#d6d6d6" stroke-width="0.5"/></svg>
<div class="a" style="left:424.2px;top:491.9px;width:14.7px;height:14.7px;background:#d6d6d6"></div>
<svg class="a" style="left:426.2px;top:494.5px" width="11" height="10" viewBox="0 0 11 10"><rect x="0.5" y="0.5" width="8" height="7" fill="none" stroke="#b4b4b4" stroke-width="0.8"/><path d="M1 7L3.5 4L5.5 6L6.5 5L8 7z" fill="#b4b4b4"/><rect x="6" y="5.8" width="4.5" height="3.8" fill="#9fb6c8"/></svg>
<div class="a" style="left:443.5px;top:491.9px;width:14.7px;height:14.7px;background:#d6d6d6"></div>
<svg class="a" style="left:445.2px;top:494.5px" width="12" height="10" viewBox="0 0 12 10"><rect x="0.5" y="1" width="10" height="7" fill="none" stroke="#b4b4b4" stroke-width="0.8"/><path d="M0.5 2.6h10M0.5 6.4h10M3 1v7M8 1v7" stroke="#b4b4b4" stroke-width="0.6"/><rect x="7.3" y="6" width="4.2" height="3.6" fill="#9fb6c8"/></svg>
<div class="a" style="left:463.4px;top:491.9px;width:15px;height:14.7px;background:#c9c9c9"></div>
<svg class="a" style="left:465.9px;top:494.3px" width="10" height="10" viewBox="0 0 10 10"><g transform="translate(5 5)"><circle r="3.9" fill="none" stroke="#111" stroke-width="1.8" stroke-dasharray="1.53 1.53" transform="rotate(11)"/><circle r="2.7" fill="none" stroke="#111" stroke-width="1.7"/></g></svg>
<div class="t" style="left:5.3px;top:513.68px;font-size:7.04px;transform:scaleX(0.9091);transform-origin:0 50%;color:#1e1e1e">entry Mulpic ( Z7475 ) IP: 127.0.0.1</div>
<div class="t" style="left:119.5px;top:513.68px;font-size:7.04px;transform:scaleX(0.9091);transform-origin:0 50%;color:#1e1e1e">Line: 14322</div>
<div class="t" style="left:167.7px;top:513.68px;font-size:7.04px;transform:scaleX(0.9091);transform-origin:0 50%;color:#1e1e1e">89,63 Hz</div>
<div class="t" style="left:198px;top:515.25px;font-size:5.50px;transform:scaleX(0.9091);transform-origin:0 50%;color:#333">X:</div>
<div class="t" style="left:218px;top:515.25px;font-size:5.50px;transform:scaleX(0.9091);transform-origin:0 50%;color:#333">Y:</div>
<div class="t" style="left:238px;top:515.25px;font-size:5.50px;transform:scaleX(0.9091);transform-origin:0 50%;color:#333">T:</div>
<div class="t" style="left:363.6px;top:513.68px;font-size:7.04px;transform:scaleX(0.9091);transform-origin:0 50%;color:#1e1e1e">entry Mulpic ( Z7475 ) IP: 127.0.0.1</div>
<div class="t" style="left:477.5px;top:513.68px;font-size:7.04px;transform:scaleX(0.9091);transform-origin:0 50%;color:#1e1e1e">Line: 14322</div>
<div class="t" style="left:524.5px;top:513.68px;font-size:7.04px;transform:scaleX(0.9091);transform-origin:0 50%;color:#1e1e1e">8</div>
<div class="t" style="left:535px;top:515.25px;font-size:5.50px;transform:scaleX(0.9091);transform-origin:0 50%;color:#333">X:</div>
<div class="t" style="left:555px;top:515.25px;font-size:5.50px;transform:scaleX(0.9091);transform-origin:0 50%;color:#333">Y:</div>
<div class="t" style="left:575px;top:515.25px;font-size:5.50px;transform:scaleX(0.9091);transform-origin:0 50%;color:#333">T:</div>
<div class="a" style="left:276.8px;top:510.6px;width:9px;height:9.2px;background:#c9c9c9"></div>
<svg class="a" style="left:278.3px;top:512px" width="6.5" height="6.5" viewBox="0 0 10 10"><g transform="translate(5 5)"><circle r="3.9" fill="none" stroke="#111" stroke-width="1.8" stroke-dasharray="1.53 1.53" transform="rotate(11)"/><circle r="2.7" fill="none" stroke="#111" stroke-width="1.7"/></g></svg>
<div class="a" style="left:612.7px;top:510.6px;width:9px;height:9.2px;background:#c9c9c9"></div>
<svg class="a" style="left:614.2px;top:512px" width="6.5" height="6.5" viewBox="0 0 10 10"><g transform="translate(5 5)"><circle r="3.9" fill="none" stroke="#111" stroke-width="1.8" stroke-dasharray="1.53 1.53" transform="rotate(11)"/><circle r="2.7" fill="none" stroke="#111" stroke-width="1.7"/></g></svg>
<div class="a" style="left:409.5px;top:132px;width:181.20000000000005px;height:323.5px;background:#fff"></div>
<div class="a" style="left:409.5px;top:133px;width:180.20000000000005px;height:322.5px;background:#000"></div>
<div class="a" style="left:426px;top:200px;width:29px;height:255.5px;background:linear-gradient(90deg,rgba(20,20,20,0) 0%,rgba(14,14,14,.6) 50%,#0e0e0e 100%);-webkit-mask-image:linear-gradient(180deg,transparent 0%,rgba(0,0,0,.5) 40%,#000 75%)"></div>
<div class="a" style="left:454.6px;top:182px;width:96.6px;height:273.5px;border-radius:3.5px 3.5px 0 0;background:linear-gradient(90deg,transparent 44.9%,rgba(0,0,0,0.02) 46.3%,transparent 47.7%),linear-gradient(90deg,transparent 50.3%,rgba(255,255,255,0.02) 50.9%,transparent 51.6%),linear-gradient(90deg,transparent 62.1%,rgba(0,0,0,0.03) 62.7%,transparent 63.3%),linear-gradient(90deg,transparent 9.8%,rgba(0,0,0,0.03) 11.0%,transparent 12.2%),linear-gradient(90deg,transparent 96.3%,rgba(255,255,255,0.03) 97.4%,transparent 98.6%),linear-gradient(90deg,transparent 16.3%,rgba(0,0,0,0.01) 17.3%,transparent 18.3%),linear-gradient(90deg,transparent 19.5%,rgba(0,0,0,0.02) 20.0%,transparent 20.5%),linear-gradient(90deg,transparent 43.7%,rgba(255,255,255,0.03) 44.8%,transparent 45.8%),linear-gradient(90deg,transparent 49.5%,rgba(0,0,0,0.03) 50.4%,transparent 51.4%),linear-gradient(90deg,transparent 97.8%,rgba(255,255,255,0.03) 99.1%,transparent 100.5%),linear-gradient(90deg,transparent 31.6%,rgba(0,0,0,0.02) 32.4%,transparent 33.2%),linear-gradient(90deg,transparent 75.3%,rgba(0,0,0,0.02) 76.7%,transparent 78.0%),linear-gradient(90deg,transparent 93.9%,rgba(0,0,0,0.03) 94.4%,transparent 94.9%),linear-gradient(90deg,transparent 89.3%,rgba(0,0,0,0.02) 90.8%,transparent 92.3%),linear-gradient(90deg,transparent 8.1%,rgba(0,0,0,0.03) 9.4%,transparent 10.6%),linear-gradient(90deg,transparent 9.5%,rgba(255,255,255,0.02) 10.9%,transparent 12.4%),linear-gradient(90deg,transparent 12.4%,rgba(0,0,0,0.02) 13.0%,transparent 13.6%),linear-gradient(90deg,transparent 78.3%,rgba(0,0,0,0.01) 79.4%,transparent 80.4%),linear-gradient(90deg,transparent 19.5%,rgba(255,255,255,0.03) 20.1%,transparent 20.8%),linear-gradient(90deg,transparent 12.3%,rgba(0,0,0,0.02) 13.0%,transparent 13.7%),linear-gradient(90deg,transparent 95.2%,rgba(255,255,255,0.03) 96.0%,transparent 96.8%),linear-gradient(90deg,transparent 21.4%,rgba(255,255,255,0.02) 22.8%,transparent 24.1%),linear-gradient(90deg,transparent 10.7%,rgba(0,0,0,0.03) 11.4%,transparent 12.2%),linear-gradient(90deg,transparent 76.0%,rgba(0,0,0,0.02) 76.7%,transparent 77.5%),linear-gradient(90deg,transparent 9.7%,rgba(255,255,255,0.02) 10.5%,transparent 11.2%),linear-gradient(90deg,transparent 37.1%,rgba(0,0,0,0.02) 38.5%,transparent 40.0%),linear-gradient(90deg,transparent 56.7%,rgba(0,0,0,0.03) 57.4%,transparent 58.1%),linear-gradient(90deg,transparent 89.1%,rgba(0,0,0,0.03) 89.9%,transparent 90.6%),linear-gradient(90deg,transparent 72.7%,rgba(255,255,255,0.03) 73.4%,transparent 74.1%),linear-gradient(90deg,transparent 86.6%,rgba(0,0,0,0.03) 87.5%,transparent 88.4%),linear-gradient(90deg,transparent 4.8%,rgba(255,255,255,0.03) 5.5%,transparent 6.2%),linear-gradient(90deg,transparent 25.9%,rgba(0,0,0,0.03) 27.0%,transparent 28.1%),linear-gradient(90deg,transparent 18.0%,rgba(0,0,0,0.03) 18.6%,transparent 19.2%),linear-gradient(90deg,transparent 55.3%,rgba(0,0,0,0.03) 56.4%,transparent 57.5%),linear-gradient(90deg,transparent 90.0%,rgba(0,0,0,0.02) 90.5%,transparent 91.0%),linear-gradient(90deg,transparent 44.2%,rgba(0,0,0,0.01) 44.9%,transparent 45.6%),linear-gradient(90deg,transparent 56.5%,rgba(255,255,255,0.01) 57.4%,transparent 58.2%),linear-gradient(90deg,transparent 96.1%,rgba(255,255,255,0.03) 97.3%,transparent 98.5%),linear-gradient(90deg,transparent 14.6%,rgba(255,255,255,0.01) 15.1%,transparent 15.6%),linear-gradient(90deg,transparent 69.0%,rgba(255,255,255,0.03) 69.5%,transparent 70.0%),linear-gradient(90deg,transparent 47.8%,rgba(255,255,255,0.03) 48.6%,transparent 49.4%),linear-gradient(90deg,transparent 8.3%,rgba(255,255,255,0.02) 9.5%,transparent 10.8%),linear-gradient(90deg,transparent 72.5%,rgba(255,255,255,0.03) 73.8%,transparent 75.1%),linear-gradient(90deg,transparent 35.1%,rgba(255,255,255,0.03) 36.5%,transparent 37.9%),linear-gradient(90deg,transparent 41.5%,rgba(255,255,255,0.03) 42.8%,transparent 44.2%),linear-gradient(180deg,#c8c8c8 0%,#c0c0c0 2%,#b7b7b7 6%,#b0b0b0 14%,#aaaaaa 22%,#b5b5b5 27%,#b9b9b9 40%,#bfbfbf 47%,#c8c8c8 70%,#cfcfcf 100%)"></div>
<div class="a" style="left:454.6px;top:182px;width:96.6px;height:6px;border-radius:3.5px 3.5px 0 0;background:linear-gradient(180deg,#c8c8c8,rgba(184,184,184,0))"></div>
<div class="a" style="left:455px;top:186px;width:1.8px;height:269.5px;background:linear-gradient(180deg,rgba(255,255,255,0) 0%,rgba(255,255,255,.6) 15%,#fff 40%,#fff 100%)"></div>
<div class="a" style="left:549.4px;top:186px;width:1.8px;height:269.5px;background:linear-gradient(180deg,rgba(255,255,255,0) 0%,rgba(255,255,255,.6) 15%,#fff 40%,#fff 100%)"></div>
<div class="a" style="left:408.0px;top:132px;width:1.5px;height:324.5px;background:#fff"></div>
<div class="a" style="left:406.9px;top:449.42999999999995px;width:2.6px;height:1px;background:#444;opacity:.7"></div>
<div class="a" style="left:406.9px;top:442.96px;width:2.6px;height:1px;background:#444;opacity:.7"></div>
<div class="a" style="left:406.9px;top:436.48999999999995px;width:2.6px;height:1px;background:#444;opacity:.7"></div>
<div class="a" style="left:406.9px;top:430.02px;width:2.6px;height:1px;background:#444;opacity:.7"></div>
<div class="a" style="left:406.9px;top:423.54999999999995px;width:2.6px;height:1px;background:#444;opacity:.7"></div>
<div class="a" style="left:406.9px;top:417.08px;width:2.6px;height:1px;background:#444;opacity:.7"></div>
<div class="a" style="left:406.9px;top:410.60999999999996px;width:2.6px;height:1px;background:#444;opacity:.7"></div>
<div class="a" style="left:406.9px;top:404.14px;width:2.6px;height:1px;background:#444;opacity:.7"></div>
<div class="a" style="left:406.9px;top:397.66999999999996px;width:2.6px;height:1px;background:#444;opacity:.7"></div>
<div class="a" style="left:406.9px;top:384.72999999999996px;width:2.6px;height:1px;background:#444;opacity:.7"></div>
<div class="a" style="left:406.9px;top:378.26px;width:2.6px;height:1px;background:#444;opacity:.7"></div>
<div class="a" style="left:406.9px;top:371.78999999999996px;width:2.6px;height:1px;background:#444;opacity:.7"></div>
<div class="a" style="left:406.9px;top:365.32px;width:2.6px;height:1px;background:#444;opacity:.7"></div>
<div class="a" style="left:406.9px;top:358.84999999999997px;width:2.6px;height:1px;background:#444;opacity:.7"></div>
<div class="a" style="left:406.9px;top:352.38px;width:2.6px;height:1px;background:#444;opacity:.7"></div>
<div class="a" style="left:406.9px;top:345.90999999999997px;width:2.6px;height:1px;background:#444;opacity:.7"></div>
<div class="a" style="left:406.9px;top:339.43999999999994px;width:2.6px;height:1px;background:#444;opacity:.7"></div>
<div class="a" style="left:406.9px;top:332.96999999999997px;width:2.6px;height:1px;background:#444;opacity:.7"></div>
<div class="a" style="left:406.9px;top:320.03px;width:2.6px;height:1px;background:#444;opacity:.7"></div>
<div class="a" style="left:406.9px;top:313.55999999999995px;width:2.6px;height:1px;background:#444;opacity:.7"></div>
<div class="a" style="left:406.9px;top:307.09px;width:2.6px;height:1px;background:#444;opacity:.7"></div>
<div class="a" style="left:406.9px;top:300.62px;width:2.6px;height:1px;background:#444;opacity:.7"></div>
<div class="a" style="left:406.9px;top:294.15px;width:2.6px;height:1px;background:#444;opacity:.7"></div>
<div class="a" style="left:406.9px;top:287.67999999999995px;width:2.6px;height:1px;background:#444;opacity:.7"></div>
<div class="a" style="left:406.9px;top:281.2099999999999px;width:2.6px;height:1px;background:#444;opacity:.7"></div>
<div class="a" style="left:406.9px;top:274.74px;width:2.6px;height:1px;background:#444;opacity:.7"></div>
<div class="a" style="left:406.9px;top:268.27px;width:2.6px;height:1px;background:#444;opacity:.7"></div>
<div class="a" style="left:406.9px;top:255.32999999999996px;width:2.6px;height:1px;background:#444;opacity:.7"></div>
<div class="a" style="left:406.9px;top:248.85999999999996px;width:2.6px;height:1px;background:#444;opacity:.7"></div>
<div class="a" style="left:406.9px;top:242.39px;width:2.6px;height:1px;background:#444;opacity:.7"></div>
<div class="a" style="left:406.9px;top:235.92px;width:2.6px;height:1px;background:#444;opacity:.7"></div>
<div class="a" style="left:406.9px;top:229.44999999999996px;width:2.6px;height:1px;background:#444;opacity:.7"></div>
<div class="a" style="left:406.9px;top:222.97999999999996px;width:2.6px;height:1px;background:#444;opacity:.7"></div>
<div class="a" style="left:406.9px;top:216.50999999999996px;width:2.6px;height:1px;background:#444;opacity:.7"></div>
<div class="a" style="left:406.9px;top:210.04px;width:2.6px;height:1px;background:#444;opacity:.7"></div>
<div class="a" style="left:406.9px;top:203.56999999999996px;width:2.6px;height:1px;background:#444;opacity:.7"></div>
<div class="a" style="left:406.9px;top:190.63px;width:2.6px;height:1px;background:#444;opacity:.7"></div>
<div class="a" style="left:406.9px;top:184.15999999999997px;width:2.6px;height:1px;background:#444;opacity:.7"></div>
<div class="a" style="left:406.9px;top:177.69px;width:2.6px;height:1px;background:#444;opacity:.7"></div>
<div class="a" style="left:406.9px;top:171.2199999999999px;width:2.6px;height:1px;background:#444;opacity:.7"></div>
<div class="a" style="left:406.9px;top:164.74999999999994px;width:2.6px;height:1px;background:#444;opacity:.7"></div>
<div class="a" style="left:406.9px;top:158.27999999999997px;width:2.6px;height:1px;background:#444;opacity:.7"></div>
<div class="a" style="left:406.9px;top:151.80999999999995px;width:2.6px;height:1px;background:#444;opacity:.7"></div>
<div class="a" style="left:406.9px;top:145.33999999999997px;width:2.6px;height:1px;background:#444;opacity:.7"></div>
<div class="a" style="left:406.9px;top:138.86999999999995px;width:2.6px;height:1px;background:#444;opacity:.7"></div>
<div class="a" style="left:404.5px;top:132.29999999999998px;width:5px;height:1.2px;background:#444"></div>
<div class="t" style="left:402.9px;top:131.10px;font-size:7.0px;color:#111;transform:translateX(-100%) scaleX(0.92);transform-origin:100% 50%">10</div>
<div class="a" style="left:404.5px;top:196.99999999999997px;width:5px;height:1.2px;background:#444"></div>
<div class="t" style="left:402.9px;top:193.70px;font-size:7.0px;color:#111;transform:translateX(-100%) scaleX(0.92);transform-origin:100% 50%">8</div>
<div class="a" style="left:404.5px;top:261.69999999999993px;width:5px;height:1.2px;background:#444"></div>
<div class="t" style="left:402.9px;top:258.40px;font-size:7.0px;color:#111;transform:translateX(-100%) scaleX(0.92);transform-origin:100% 50%">6</div>
<div class="a" style="left:404.5px;top:326.4px;width:5px;height:1.2px;background:#444"></div>
<div class="t" style="left:402.9px;top:323.10px;font-size:7.0px;color:#111;transform:translateX(-100%) scaleX(0.92);transform-origin:100% 50%">4</div>
<div class="a" style="left:404.5px;top:391.09999999999997px;width:5px;height:1.2px;background:#444"></div>
<div class="t" style="left:402.9px;top:387.80px;font-size:7.0px;color:#111;transform:translateX(-100%) scaleX(0.92);transform-origin:100% 50%">2</div>
<div class="a" style="left:404.5px;top:455.79999999999995px;width:5px;height:1.2px;background:#444"></div>
<div class="t" style="left:402.9px;top:449.60px;font-size:7.0px;color:#111;transform:translateX(-100%) scaleX(0.92);transform-origin:100% 50%">0</div>
<div class="a" style="left:408.5px;top:455.5px;width:181.20000000000005px;height:1.5px;background:#fff"></div>
<div class="a" style="left:411.14959999999996px;top:455.5px;width:1px;height:2.6px;background:#444;opacity:.7"></div>
<div class="a" style="left:418.5288px;top:455.5px;width:1px;height:2.6px;background:#444;opacity:.7"></div>
<div class="a" style="left:433.2872px;top:455.5px;width:1px;height:2.6px;background:#444;opacity:.7"></div>
<div class="a" style="left:440.66639999999995px;top:455.5px;width:1px;height:2.6px;background:#444;opacity:.7"></div>
<div class="a" style="left:448.0456px;top:455.5px;width:1px;height:2.6px;background:#444;opacity:.7"></div>
<div class="a" style="left:455.4248px;top:455.5px;width:1px;height:2.6px;background:#444;opacity:.7"></div>
<div class="a" style="left:470.1832px;top:455.5px;width:1px;height:2.6px;background:#444;opacity:.7"></div>
<div class="a" style="left:477.56239999999997px;top:455.5px;width:1px;height:2.6px;background:#444;opacity:.7"></div>
<div class="a" style="left:484.9416px;top:455.5px;width:1px;height:2.6px;background:#444;opacity:.7"></div>
<div class="a" style="left:492.32079999999996px;top:455.5px;width:1px;height:2.6px;background:#444;opacity:.7"></div>
<div class="a" style="left:507.0792px;top:455.5px;width:1px;height:2.6px;background:#444;opacity:.7"></div>
<div class="a" style="left:514.4584px;top:455.5px;width:1px;height:2.6px;background:#444;opacity:.7"></div>
<div class="a" style="left:521.8376px;top:455.5px;width:1px;height:2.6px;background:#444;opacity:.7"></div>
<div class="a" style="left:529.2168px;top:455.5px;width:1px;height:2.6px;background:#444;opacity:.7"></div>
<div class="a" style="left:543.9752px;top:455.5px;width:1px;height:2.6px;background:#444;opacity:.7"></div>
<div class="a" style="left:551.3543999999999px;top:455.5px;width:1px;height:2.6px;background:#444;opacity:.7"></div>
<div class="a" style="left:558.7336px;top:455.5px;width:1px;height:2.6px;background:#444;opacity:.7"></div>
<div class="a" style="left:566.1128px;top:455.5px;width:1px;height:2.6px;background:#444;opacity:.7"></div>
<div class="a" style="left:580.8712px;top:455.5px;width:1px;height:2.6px;background:#444;opacity:.7"></div>
<div class="a" style="left:588.2504px;top:455.5px;width:1px;height:2.6px;background:#444;opacity:.7"></div>
<div class="a" style="left:425.808px;top:455.5px;width:1.2px;height:4.8px;background:#444"></div>
<div class="t" style="left:426.408px;top:461.20px;font-size:7.0px;color:#111;transform:translateX(-50%) scaleX(0.92)">-32</div>
<div class="a" style="left:462.70399999999995px;top:455.5px;width:1.2px;height:4.8px;background:#444"></div>
<div class="t" style="left:463.304px;top:461.20px;font-size:7.0px;color:#111;transform:translateX(-50%) scaleX(0.92)">-16</div>
<div class="a" style="left:499.59999999999997px;top:455.5px;width:1.2px;height:4.8px;background:#444"></div>
<div class="t" style="left:500.2px;top:461.20px;font-size:7.0px;color:#111;transform:translateX(-50%) scaleX(0.92)">0</div>
<div class="a" style="left:536.496px;top:455.5px;width:1.2px;height:4.8px;background:#444"></div>
<div class="t" style="left:537.096px;top:461.20px;font-size:7.0px;color:#111;transform:translateX(-50%) scaleX(0.92)">16</div>
<div class="a" style="left:573.3919999999999px;top:455.5px;width:1.2px;height:4.8px;background:#444"></div>
<div class="t" style="left:573.992px;top:461.20px;font-size:7.0px;color:#111;transform:translateX(-50%) scaleX(0.92)">32</div>
<div class="t" style="left:371.1px;top:294.6px;font-size:6.6px;color:#1e1e1e;transform:translate(-50%,-50%) rotate(-90deg)">Seconds</div>
<div class="t" style="left:504.5px;top:471.03px;font-size:7.15px;transform:scaleX(0.9091);transform-origin:0 50%;color:#1e1e1e">Degrees</div>
<div class="t" style="left:363.5px;top:473.25px;font-size:6.71px;transform:scaleX(0.9091);transform-origin:0 50%;color:#1e1e1e">Operator Side</div>
<div class="t" style="left:597px;top:473.08px;font-size:7.04px;transform:scaleX(0.9091);transform-origin:0 50%;color:#1e1e1e">Far Side</div>
<div class="a" style="left:623.2px;top:130.8px;width:144.2px;height:388.7px;background:#b9b5b2;border-radius:2.5px"></div>
<div class="t" style="left:695.4px;top:134.47px;font-size:7.26px;transform:translateX(-50%) scaleX(0.9091);transform-origin:50% 50%;color:#1a1a1a;font-weight:bold">Analysis</div>
<svg class="a" style="left:754.5px;top:133.8px" width="8" height="9" viewBox="0 0 8 9"><rect x="0.4" y="0.4" width="7.2" height="8.2" rx="1" fill="none" stroke="#cfcbc8" stroke-width="0.6"/><path d="M2 2.2h2.6l1.4 1.2v4H2z" fill="none" stroke="#d2cecb" stroke-width="0.6"/><path d="M2.6 4.6h2.8M2.6 6h2.8" stroke="#d2cecb" stroke-width="0.5"/></svg>
<div class="a" style="left:627.8px;top:148.2px;width:135.4px;height:21.6px;background:#e6e6e6"></div>
<div class="a" style="left:627.8px;top:148.2px;width:135.4px;height:0.8px;background:#c5e0ec"></div>
<div class="a" style="left:671.2px;top:158.7px;width:70.3px;height:0.8px;background:#c5e0ec"></div>
<div class="a" style="left:627.8px;top:148.2px;width:0.8px;height:21.6px;background:#c5e0ec"></div>
<div class="a" style="left:671.2px;top:148.2px;width:0.8px;height:21.6px;background:#c5e0ec"></div>
<div class="a" style="left:697.5px;top:158.7px;width:0.8px;height:11.1px;background:#c5e0ec"></div>
<div class="a" style="left:741.3px;top:148.2px;width:0.8px;height:21.6px;background:#c5e0ec"></div>
<div class="a" style="left:762.4px;top:148.2px;width:0.8px;height:21.6px;background:#c5e0ec"></div>
<div class="t" style="left:649.5px;top:156.99px;font-size:5.83px;transform:translateX(-50%) scaleX(0.9091);transform-origin:50% 50%;color:#111;-webkit-text-stroke:0.12px #111">Name</div>
<div class="t" style="left:706.4px;top:151.88px;font-size:5.83px;transform:translateX(-50%) scaleX(0.9091);transform-origin:50% 50%;color:#111;-webkit-text-stroke:0.12px #111">Temperatures</div>
<div class="t" style="left:684.4px;top:162.59px;font-size:5.83px;transform:translateX(-50%) scaleX(0.9091);transform-origin:50% 50%;color:#111;-webkit-text-stroke:0.12px #111">°C</div>
<div class="t" style="left:719.5px;top:162.59px;font-size:5.83px;transform:translateX(-50%) scaleX(0.9091);transform-origin:50% 50%;color:#111;-webkit-text-stroke:0.12px #111">Processing</div>
<div class="t" style="left:752.2px;top:156.69px;font-size:5.83px;transform:translateX(-50%) scaleX(0.9091);transform-origin:50% 50%;color:#111;-webkit-text-stroke:0.12px #111">Alarm</div>
<div class="a" style="left:627.8px;top:169.8px;width:135.4px;height:9.78px;background:#e8e8e8;border-bottom:0.8px solid #c8c8c8"></div>
<div class="a" style="left:671.2px;top:169.8px;width:0.8px;height:9.78px;background:#cfcfcf"></div>
<div class="a" style="left:697.5px;top:169.8px;width:0.8px;height:9.78px;background:#cfcfcf"></div>
<div class="a" style="left:741.5px;top:169.8px;width:0.8px;height:9.78px;background:#cfcfcf"></div>
<div class="t" style="left:649.5px;top:173.09px;font-size:5.83px;transform:translateX(-50%) scaleX(0.9091);transform-origin:50% 50%;color:#1e1e1e">Zone 1</div>
<div class="t" style="left:684.4px;top:173.09px;font-size:5.83px;transform:translateX(-50%) scaleX(0.9091);transform-origin:50% 50%;color:#1e1e1e">616</div>
<div class="t" style="left:719.5px;top:173.09px;font-size:5.83px;transform:translateX(-50%) scaleX(0.9091);transform-origin:50% 50%;color:#1e1e1e">Peak</div>
<div class="a" style="left:749.6999999999999px;top:172.80px;width:5.2px;height:5.2px;border-radius:50%;background:radial-gradient(circle at 50% 45%,#8a8a8a 0,#6a6a6a 45%,#4a4a4a 100%);box-shadow:0 0 0 0.6px #c8c8c8"></div>
<div class="a" style="left:627.8px;top:179.58px;width:135.4px;height:9.78px;background:#e8e8e8;border-bottom:0.8px solid #c8c8c8"></div>
<div class="a" style="left:671.2px;top:179.58px;width:0.8px;height:9.78px;background:#cfcfcf"></div>
<div class="a" style="left:697.5px;top:179.58px;width:0.8px;height:9.78px;background:#cfcfcf"></div>
<div class="a" style="left:741.5px;top:179.58px;width:0.8px;height:9.78px;background:#cfcfcf"></div>
<div class="t" style="left:649.5px;top:182.87px;font-size:5.83px;transform:translateX(-50%) scaleX(0.9091);transform-origin:50% 50%;color:#1e1e1e">Zone 2</div>
<div class="t" style="left:684.4px;top:182.87px;font-size:5.83px;transform:translateX(-50%) scaleX(0.9091);transform-origin:50% 50%;color:#1e1e1e">529</div>
<div class="t" style="left:719.5px;top:182.87px;font-size:5.83px;transform:translateX(-50%) scaleX(0.9091);transform-origin:50% 50%;color:#1e1e1e">Peak</div>
<div class="a" style="left:749.6999999999999px;top:182.58px;width:5.2px;height:5.2px;border-radius:50%;background:radial-gradient(circle at 50% 45%,#8a8a8a 0,#6a6a6a 45%,#4a4a4a 100%);box-shadow:0 0 0 0.6px #c8c8c8"></div>
<div class="a" style="left:627.8px;top:189.36px;width:135.4px;height:9.78px;background:#e8e8e8;border-bottom:0.8px solid #c8c8c8"></div>
<div class="a" style="left:671.2px;top:189.36px;width:0.8px;height:9.78px;background:#cfcfcf"></div>
<div class="a" style="left:697.5px;top:189.36px;width:0.8px;height:9.78px;background:#cfcfcf"></div>
<div class="a" style="left:741.5px;top:189.36px;width:0.8px;height:9.78px;background:#cfcfcf"></div>
<div class="t" style="left:649.5px;top:192.65px;font-size:5.83px;transform:translateX(-50%) scaleX(0.9091);transform-origin:50% 50%;color:#1e1e1e">Zone 3</div>
<div class="t" style="left:684.4px;top:192.65px;font-size:5.83px;transform:translateX(-50%) scaleX(0.9091);transform-origin:50% 50%;color:#1e1e1e">523</div>
<div class="t" style="left:719.5px;top:192.65px;font-size:5.83px;transform:translateX(-50%) scaleX(0.9091);transform-origin:50% 50%;color:#1e1e1e">Peak</div>
<div class="a" style="left:749.6999999999999px;top:192.36px;width:5.2px;height:5.2px;border-radius:50%;background:radial-gradient(circle at 50% 45%,#8a8a8a 0,#6a6a6a 45%,#4a4a4a 100%);box-shadow:0 0 0 0.6px #c8c8c8"></div>
<div class="a" style="left:627.8px;top:199.14000000000001px;width:135.4px;height:9.78px;background:#e8e8e8;border-bottom:0.8px solid #c8c8c8"></div>
<div class="a" style="left:671.2px;top:199.14000000000001px;width:0.8px;height:9.78px;background:#cfcfcf"></div>
<div class="a" style="left:697.5px;top:199.14000000000001px;width:0.8px;height:9.78px;background:#cfcfcf"></div>
<div class="a" style="left:741.5px;top:199.14000000000001px;width:0.8px;height:9.78px;background:#cfcfcf"></div>
<div class="t" style="left:649.5px;top:202.43px;font-size:5.83px;transform:translateX(-50%) scaleX(0.9091);transform-origin:50% 50%;color:#1e1e1e">Zone 4</div>
<div class="t" style="left:684.4px;top:202.43px;font-size:5.83px;transform:translateX(-50%) scaleX(0.9091);transform-origin:50% 50%;color:#1e1e1e">529</div>
<div class="t" style="left:719.5px;top:202.43px;font-size:5.83px;transform:translateX(-50%) scaleX(0.9091);transform-origin:50% 50%;color:#1e1e1e">Peak</div>
<div class="a" style="left:749.6999999999999px;top:202.14px;width:5.2px;height:5.2px;border-radius:50%;background:radial-gradient(circle at 50% 45%,#8a8a8a 0,#6a6a6a 45%,#4a4a4a 100%);box-shadow:0 0 0 0.6px #c8c8c8"></div>
<div class="a" style="left:627.8px;top:208.92000000000002px;width:135.4px;height:9.78px;background:#e8e8e8;border-bottom:0.8px solid #c8c8c8"></div>
<div class="a" style="left:671.2px;top:208.92000000000002px;width:0.8px;height:9.78px;background:#cfcfcf"></div>
<div class="a" style="left:697.5px;top:208.92000000000002px;width:0.8px;height:9.78px;background:#cfcfcf"></div>
<div class="a" style="left:741.5px;top:208.92000000000002px;width:0.8px;height:9.78px;background:#cfcfcf"></div>
<div class="t" style="left:649.5px;top:212.21px;font-size:5.83px;transform:translateX(-50%) scaleX(0.9091);transform-origin:50% 50%;color:#1e1e1e">Zone 5</div>
<div class="t" style="left:684.4px;top:212.21px;font-size:5.83px;transform:translateX(-50%) scaleX(0.9091);transform-origin:50% 50%;color:#1e1e1e">609</div>
<div class="t" style="left:719.5px;top:212.21px;font-size:5.83px;transform:translateX(-50%) scaleX(0.9091);transform-origin:50% 50%;color:#1e1e1e">Peak</div>
<div class="a" style="left:749.6999999999999px;top:211.92px;width:5.2px;height:5.2px;border-radius:50%;background:radial-gradient(circle at 50% 45%,#8a8a8a 0,#6a6a6a 45%,#4a4a4a 100%);box-shadow:0 0 0 0.6px #c8c8c8"></div>
<div class="a" style="left:627.8px;top:218.70000000000002px;width:135.4px;height:9.78px;background:#e8e8e8;border-bottom:0.8px solid #c8c8c8"></div>
<div class="a" style="left:671.2px;top:218.70000000000002px;width:0.8px;height:9.78px;background:#cfcfcf"></div>
<div class="a" style="left:697.5px;top:218.70000000000002px;width:0.8px;height:9.78px;background:#cfcfcf"></div>
<div class="a" style="left:741.5px;top:218.70000000000002px;width:0.8px;height:9.78px;background:#cfcfcf"></div>
<div class="t" style="left:649.5px;top:221.99px;font-size:5.83px;transform:translateX(-50%) scaleX(0.9091);transform-origin:50% 50%;color:#1e1e1e">Zone 6</div>
<div class="t" style="left:684.4px;top:221.99px;font-size:5.83px;transform:translateX(-50%) scaleX(0.9091);transform-origin:50% 50%;color:#1e1e1e">100</div>
<div class="t" style="left:719.5px;top:221.99px;font-size:5.83px;transform:translateX(-50%) scaleX(0.9091);transform-origin:50% 50%;color:#1e1e1e">Off</div>
<div class="a" style="left:749.6999999999999px;top:221.70px;width:5.2px;height:5.2px;border-radius:50%;background:radial-gradient(circle at 50% 45%,#8a8a8a 0,#6a6a6a 45%,#4a4a4a 100%);box-shadow:0 0 0 0.6px #c8c8c8"></div>
<div class="a" style="left:627.8px;top:228.48000000000002px;width:135.4px;height:9.78px;background:#e8e8e8;border-bottom:0.8px solid #c8c8c8"></div>
<div class="a" style="left:671.2px;top:228.48000000000002px;width:0.8px;height:9.78px;background:#cfcfcf"></div>
<div class="a" style="left:697.5px;top:228.48000000000002px;width:0.8px;height:9.78px;background:#cfcfcf"></div>
<div class="a" style="left:741.5px;top:228.48000000000002px;width:0.8px;height:9.78px;background:#cfcfcf"></div>
<div class="t" style="left:649.5px;top:231.77px;font-size:5.83px;transform:translateX(-50%) scaleX(0.9091);transform-origin:50% 50%;color:#1e1e1e">Zone 7</div>
<div class="t" style="left:684.4px;top:231.77px;font-size:5.83px;transform:translateX(-50%) scaleX(0.9091);transform-origin:50% 50%;color:#1e1e1e">100</div>
<div class="t" style="left:719.5px;top:231.77px;font-size:5.83px;transform:translateX(-50%) scaleX(0.9091);transform-origin:50% 50%;color:#1e1e1e">Off</div>
<div class="a" style="left:749.6999999999999px;top:231.48px;width:5.2px;height:5.2px;border-radius:50%;background:radial-gradient(circle at 50% 45%,#8a8a8a 0,#6a6a6a 45%,#4a4a4a 100%);box-shadow:0 0 0 0.6px #c8c8c8"></div>
<div class="a" style="left:627.8px;top:238.26px;width:135.4px;height:9.78px;background:#e8e8e8;border-bottom:0.8px solid #c8c8c8"></div>
<div class="a" style="left:671.2px;top:238.26px;width:0.8px;height:9.78px;background:#cfcfcf"></div>
<div class="a" style="left:697.5px;top:238.26px;width:0.8px;height:9.78px;background:#cfcfcf"></div>
<div class="a" style="left:741.5px;top:238.26px;width:0.8px;height:9.78px;background:#cfcfcf"></div>
<div class="t" style="left:649.5px;top:241.54px;font-size:5.83px;transform:translateX(-50%) scaleX(0.9091);transform-origin:50% 50%;color:#1e1e1e">Zone 8</div>
<div class="t" style="left:684.4px;top:241.54px;font-size:5.83px;transform:translateX(-50%) scaleX(0.9091);transform-origin:50% 50%;color:#1e1e1e">100</div>
<div class="t" style="left:719.5px;top:241.54px;font-size:5.83px;transform:translateX(-50%) scaleX(0.9091);transform-origin:50% 50%;color:#1e1e1e">Off</div>
<div class="a" style="left:749.6999999999999px;top:241.26px;width:5.2px;height:5.2px;border-radius:50%;background:radial-gradient(circle at 50% 45%,#8a8a8a 0,#6a6a6a 45%,#4a4a4a 100%);box-shadow:0 0 0 0.6px #c8c8c8"></div>
<div class="a" style="left:627.8px;top:248.04000000000002px;width:135.4px;height:9.78px;background:#e8e8e8;border-bottom:0.8px solid #c8c8c8"></div>
<div class="a" style="left:671.2px;top:248.04000000000002px;width:0.8px;height:9.78px;background:#cfcfcf"></div>
<div class="a" style="left:697.5px;top:248.04000000000002px;width:0.8px;height:9.78px;background:#cfcfcf"></div>
<div class="a" style="left:741.5px;top:248.04000000000002px;width:0.8px;height:9.78px;background:#cfcfcf"></div>
<div class="t" style="left:649.5px;top:251.33px;font-size:5.83px;transform:translateX(-50%) scaleX(0.9091);transform-origin:50% 50%;color:#1e1e1e">Zone 9</div>
<div class="t" style="left:684.4px;top:251.33px;font-size:5.83px;transform:translateX(-50%) scaleX(0.9091);transform-origin:50% 50%;color:#1e1e1e">100</div>
<div class="t" style="left:719.5px;top:251.33px;font-size:5.83px;transform:translateX(-50%) scaleX(0.9091);transform-origin:50% 50%;color:#1e1e1e">Off</div>
<div class="a" style="left:749.6999999999999px;top:251.04px;width:5.2px;height:5.2px;border-radius:50%;background:radial-gradient(circle at 50% 45%,#8a8a8a 0,#6a6a6a 45%,#4a4a4a 100%);box-shadow:0 0 0 0.6px #c8c8c8"></div>
<div class="a" style="left:627.8px;top:257.82px;width:135.4px;height:9.78px;background:#e8e8e8;border-bottom:0.8px solid #c8c8c8"></div>
<div class="a" style="left:671.2px;top:257.82px;width:0.8px;height:9.78px;background:#cfcfcf"></div>
<div class="a" style="left:697.5px;top:257.82px;width:0.8px;height:9.78px;background:#cfcfcf"></div>
<div class="a" style="left:741.5px;top:257.82px;width:0.8px;height:9.78px;background:#cfcfcf"></div>
<div class="t" style="left:649.5px;top:261.11px;font-size:5.83px;transform:translateX(-50%) scaleX(0.9091);transform-origin:50% 50%;color:#1e1e1e">Zone 10</div>
<div class="t" style="left:684.4px;top:261.11px;font-size:5.83px;transform:translateX(-50%) scaleX(0.9091);transform-origin:50% 50%;color:#1e1e1e">100</div>
<div class="t" style="left:719.5px;top:261.11px;font-size:5.83px;transform:translateX(-50%) scaleX(0.9091);transform-origin:50% 50%;color:#1e1e1e">Off</div>
<div class="a" style="left:749.6999999999999px;top:260.82px;width:5.2px;height:5.2px;border-radius:50%;background:radial-gradient(circle at 50% 45%,#8a8a8a 0,#6a6a6a 45%,#4a4a4a 100%);box-shadow:0 0 0 0.6px #c8c8c8"></div>
<div class="a" style="left:627.8px;top:267.6px;width:135.4px;height:9.78px;background:#e8e8e8;border-bottom:0.8px solid #c8c8c8"></div>
<div class="a" style="left:671.2px;top:267.6px;width:0.8px;height:9.78px;background:#cfcfcf"></div>
<div class="a" style="left:697.5px;top:267.6px;width:0.8px;height:9.78px;background:#cfcfcf"></div>
<div class="a" style="left:741.5px;top:267.6px;width:0.8px;height:9.78px;background:#cfcfcf"></div>
<div class="t" style="left:649.5px;top:270.89px;font-size:5.83px;transform:translateX(-50%) scaleX(0.9091);transform-origin:50% 50%;color:#1e1e1e">Zone 11</div>
<div class="t" style="left:684.4px;top:270.89px;font-size:5.83px;transform:translateX(-50%) scaleX(0.9091);transform-origin:50% 50%;color:#1e1e1e">100</div>
<div class="t" style="left:719.5px;top:270.89px;font-size:5.83px;transform:translateX(-50%) scaleX(0.9091);transform-origin:50% 50%;color:#1e1e1e">Off</div>
<div class="a" style="left:749.6999999999999px;top:270.60px;width:5.2px;height:5.2px;border-radius:50%;background:radial-gradient(circle at 50% 45%,#8a8a8a 0,#6a6a6a 45%,#4a4a4a 100%);box-shadow:0 0 0 0.6px #c8c8c8"></div>
<div class="a" style="left:627.8px;top:277.38px;width:135.4px;height:9.78px;background:#e8e8e8;border-bottom:0.8px solid #c8c8c8"></div>
<div class="a" style="left:671.2px;top:277.38px;width:0.8px;height:9.78px;background:#cfcfcf"></div>
<div class="a" style="left:697.5px;top:277.38px;width:0.8px;height:9.78px;background:#cfcfcf"></div>
<div class="a" style="left:741.5px;top:277.38px;width:0.8px;height:9.78px;background:#cfcfcf"></div>
<div class="t" style="left:649.5px;top:280.67px;font-size:5.83px;transform:translateX(-50%) scaleX(0.9091);transform-origin:50% 50%;color:#1e1e1e">Zone 12</div>
<div class="t" style="left:684.4px;top:280.67px;font-size:5.83px;transform:translateX(-50%) scaleX(0.9091);transform-origin:50% 50%;color:#1e1e1e">100</div>
<div class="t" style="left:719.5px;top:280.67px;font-size:5.83px;transform:translateX(-50%) scaleX(0.9091);transform-origin:50% 50%;color:#1e1e1e">Off</div>
<div class="a" style="left:749.6999999999999px;top:280.38px;width:5.2px;height:5.2px;border-radius:50%;background:radial-gradient(circle at 50% 45%,#8a8a8a 0,#6a6a6a 45%,#4a4a4a 100%);box-shadow:0 0 0 0.6px #c8c8c8"></div>
<div class="a" style="left:627.8px;top:287.15999999999997px;width:135.4px;height:9.78px;background:#e8e8e8;border-bottom:0.8px solid #c8c8c8"></div>
<div class="a" style="left:671.2px;top:287.15999999999997px;width:0.8px;height:9.78px;background:#cfcfcf"></div>
<div class="a" style="left:697.5px;top:287.15999999999997px;width:0.8px;height:9.78px;background:#cfcfcf"></div>
<div class="a" style="left:741.5px;top:287.15999999999997px;width:0.8px;height:9.78px;background:#cfcfcf"></div>
<div class="t" style="left:649.5px;top:290.44px;font-size:5.83px;transform:translateX(-50%) scaleX(0.9091);transform-origin:50% 50%;color:#1e1e1e">Zone 13</div>
<div class="t" style="left:684.4px;top:290.44px;font-size:5.83px;transform:translateX(-50%) scaleX(0.9091);transform-origin:50% 50%;color:#1e1e1e">100</div>
<div class="t" style="left:719.5px;top:290.44px;font-size:5.83px;transform:translateX(-50%) scaleX(0.9091);transform-origin:50% 50%;color:#1e1e1e">Off</div>
<div class="a" style="left:749.6999999999999px;top:290.16px;width:5.2px;height:5.2px;border-radius:50%;background:radial-gradient(circle at 50% 45%,#8a8a8a 0,#6a6a6a 45%,#4a4a4a 100%);box-shadow:0 0 0 0.6px #c8c8c8"></div>
<div class="a" style="left:627.8px;top:296.94px;width:135.4px;height:9.78px;background:#e8e8e8;border-bottom:0.8px solid #c8c8c8"></div>
<div class="a" style="left:671.2px;top:296.94px;width:0.8px;height:9.78px;background:#cfcfcf"></div>
<div class="a" style="left:697.5px;top:296.94px;width:0.8px;height:9.78px;background:#cfcfcf"></div>
<div class="a" style="left:741.5px;top:296.94px;width:0.8px;height:9.78px;background:#cfcfcf"></div>
<div class="t" style="left:649.5px;top:300.23px;font-size:5.83px;transform:translateX(-50%) scaleX(0.9091);transform-origin:50% 50%;color:#1e1e1e">Zone 14</div>
<div class="t" style="left:684.4px;top:300.23px;font-size:5.83px;transform:translateX(-50%) scaleX(0.9091);transform-origin:50% 50%;color:#1e1e1e">100</div>
<div class="t" style="left:719.5px;top:300.23px;font-size:5.83px;transform:translateX(-50%) scaleX(0.9091);transform-origin:50% 50%;color:#1e1e1e">Off</div>
<div class="a" style="left:749.6999999999999px;top:299.94px;width:5.2px;height:5.2px;border-radius:50%;background:radial-gradient(circle at 50% 45%,#8a8a8a 0,#6a6a6a 45%,#4a4a4a 100%);box-shadow:0 0 0 0.6px #c8c8c8"></div>
<div class="a" style="left:627.8px;top:169.8px;width:0.8px;height:137px;background:#cfcfcf"></div>
<div class="a" style="left:762.4px;top:169.8px;width:0.8px;height:137px;background:#cfcfcf"></div>
<div class="a" style="left:3.6px;top:532.6px;width:0.9px;height:0.9px;background:#555"></div>
<div class="a" style="left:3.6px;top:534.3000000000001px;width:0.9px;height:0.9px;background:#555"></div>
<div class="a" style="left:3.6px;top:536.0px;width:0.9px;height:0.9px;background:#555"></div>
<div class="a" style="left:3.6px;top:537.7px;width:0.9px;height:0.9px;background:#555"></div>
<div class="a" style="left:10.3px;top:530.8px;width:13px;height:11.2px;background:#d6d6d6;border:0.5px solid #c8c8c8"></div>
<svg class="a" style="left:12.3px;top:533px" width="7.2" height="6.8" viewBox="0 0 7.2 6.8"><path d="M0.4 0.4h6.4v0.9L4.2 3.4L6.8 5.5v0.9H0.4V5.5L3 3.4L0.4 1.3z" fill="#10e030" stroke="#e8a0e8" stroke-width="0.35"/></svg>
<svg class="a" style="left:26.3px;top:534.5px" width="3.6" height="2.6" viewBox="0 0 3.6 2.6"><path d="M0.2 0.2h3.2L1.8 2.4z" fill="#a8a8a8"/></svg>
<div class="a" style="left:33.5px;top:531px;width:0.8px;height:11px;background:#d0d0d0"></div>
<svg class="a" style="left:38.3px;top:533px" width="8" height="6.6" viewBox="0 0 8 6.6"><rect x="0.5" y="0.5" width="7" height="5.6" rx="1.4" fill="#222"/><path d="M1.6 3.4Q4 1.6 6.4 3.4" fill="none" stroke="#c8c8c8" stroke-width="0.9"/><rect x="1.6" y="3.9" width="4.8" height="1" fill="#c8c8c8"/></svg>
<div class="a" style="left:49.5px;top:531px;width:0.8px;height:11px;background:#d0d0d0"></div>
<svg class="a" style="left:52.5px;top:533px" width="7.2" height="6.6" viewBox="0 0 7.2 6.6"><path d="M0.5 2.2V0.5h1.8M4.9 0.5h1.8v1.7M6.7 4.4v1.7H4.9M2.3 6.1H0.5V4.4" fill="none" stroke="#222" stroke-width="0.9"/><circle cx="3.6" cy="3.3" r="1.9" fill="#111"/></svg>
<div class="a" style="left:63.5px;top:531px;width:0.8px;height:11px;background:#d0d0d0"></div>
<div class="t" style="left:67.3px;top:534.34px;font-size:5.72px;transform:scaleX(0.9091);transform-origin:0 50%;color:#333">0 Error</div>
<div class="a" style="left:85px;top:531px;width:0.8px;height:11px;background:#d0d0d0"></div>
</body></html>
